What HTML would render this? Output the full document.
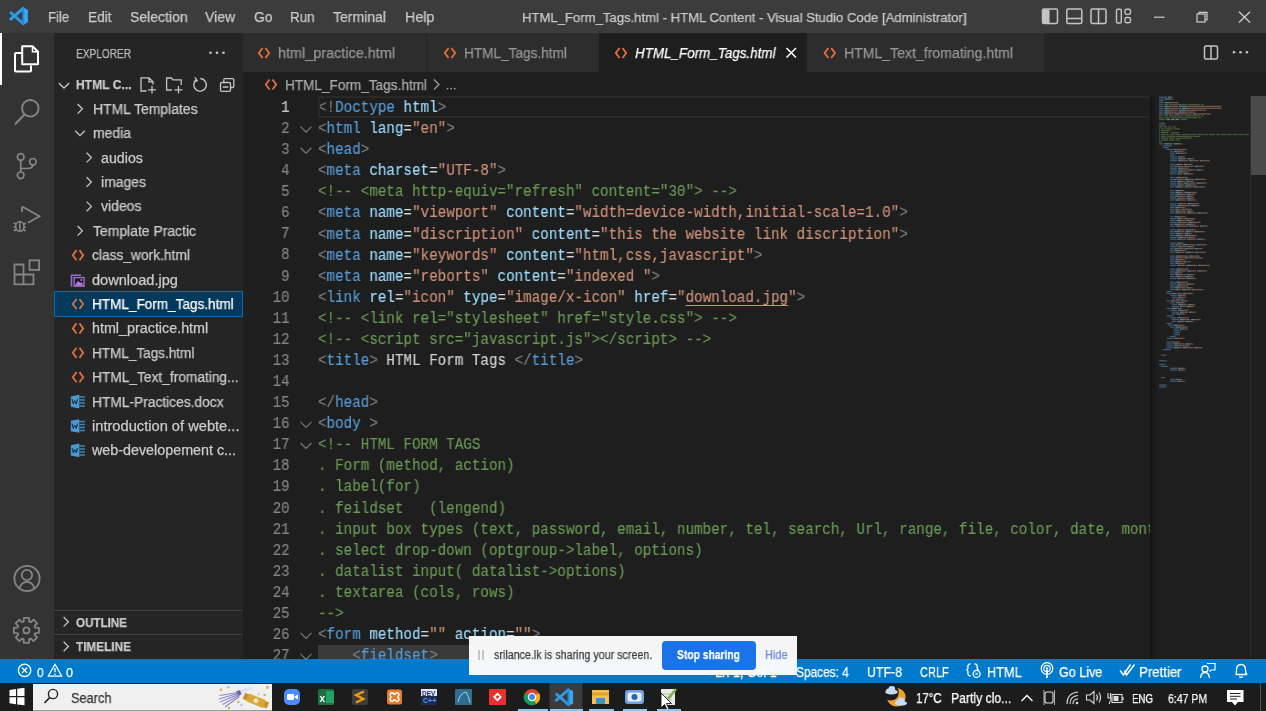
<!DOCTYPE html>
<html><head><meta charset="utf-8"><style>
html,body{margin:0;padding:0;width:1266px;height:711px;overflow:hidden;background:#1e1e1e}
.t{position:absolute;white-space:pre;line-height:1;-webkit-text-stroke:0.25px currentColor;will-change:transform;font-family:"Liberation Sans",sans-serif;transform-origin:0 0}
.code{position:absolute;font-family:"Liberation Mono",monospace;white-space:pre;will-change:transform;-webkit-text-stroke:0.15px currentColor}
</style></head><body>
<div style="position:absolute;left:0;top:0;width:1266px;height:33px;background:#3c3c3c"></div>
<div class="t" style="left:48.30px;top:9.00px;font-size:15.41px;color:#cccccc;font-weight:normal;font-style:normal;transform:scaleX(0.8533);">File</div>
<div class="t" style="left:87.70px;top:9.00px;font-size:15.41px;color:#cccccc;font-weight:normal;font-style:normal;transform:scaleX(0.8855);">Edit</div>
<div class="t" style="left:129.50px;top:9.00px;font-size:15.41px;color:#cccccc;font-weight:normal;font-style:normal;transform:scaleX(0.9117);">Selection</div>
<div class="t" style="left:205.40px;top:9.00px;font-size:15.41px;color:#cccccc;font-weight:normal;font-style:normal;transform:scaleX(0.9106);">View</div>
<div class="t" style="left:253.70px;top:9.00px;font-size:15.41px;color:#cccccc;font-weight:normal;font-style:normal;transform:scaleX(0.8994);">Go</div>
<div class="t" style="left:290.20px;top:9.00px;font-size:15.41px;color:#cccccc;font-weight:normal;font-style:normal;transform:scaleX(0.8666);">Run</div>
<div class="t" style="left:333.20px;top:9.00px;font-size:15.41px;color:#cccccc;font-weight:normal;font-style:normal;transform:scaleX(0.9083);">Terminal</div>
<div class="t" style="left:404.60px;top:9.00px;font-size:15.41px;color:#cccccc;font-weight:normal;font-style:normal;transform:scaleX(0.9274);">Help</div>
<div class="t" style="left:521.50px;top:11.00px;font-size:13.66px;color:#cccccc;font-weight:normal;font-style:normal;transform:scaleX(0.9601);">HTML_Form_Tags.html - HTML Content - Visual Studio Code [Administrator]</div>
<div style="position:absolute;left:0;top:33px;width:54px;height:626px;background:#333333"></div>
<div style="position:absolute;left:0;top:33px;width:2px;height:52px;background:#ffffff"></div>
<div style="position:absolute;left:54px;top:33px;width:189px;height:626px;background:#252526"></div>
<div class="t" style="left:76.20px;top:48.00px;font-size:12.21px;color:#bbbbbb;font-weight:normal;font-style:normal;transform:scaleX(0.8284);">EXPLORER</div>
<div class="t" style="left:76.20px;top:78.00px;font-size:13.66px;color:#cccccc;font-weight:bold;font-style:normal;transform:scaleX(0.8845);">HTML C...</div>
<div class="t" style="left:92.70px;top:102.00px;font-size:14.24px;color:#cccccc;font-weight:normal;font-style:normal;transform:scaleX(0.9788);">HTML Templates</div>
<div class="t" style="left:92.70px;top:126.00px;font-size:14.24px;color:#cccccc;font-weight:normal;font-style:normal;transform:scaleX(0.9816);">media</div>
<div class="t" style="left:100.80px;top:151.00px;font-size:14.24px;color:#cccccc;font-weight:normal;font-style:normal;transform:scaleX(1.0004);">audios</div>
<div class="t" style="left:100.80px;top:175.00px;font-size:14.24px;color:#cccccc;font-weight:normal;font-style:normal;transform:scaleX(0.9804);">images</div>
<div class="t" style="left:100.80px;top:199.00px;font-size:14.24px;color:#cccccc;font-weight:normal;font-style:normal;transform:scaleX(0.9838);">videos</div>
<div class="t" style="left:92.70px;top:224.00px;font-size:14.24px;color:#cccccc;font-weight:normal;font-style:normal;transform:scaleX(0.9791);">Template Practic</div>
<div class="t" style="left:92.30px;top:248.00px;font-size:14.24px;color:#cccccc;font-weight:normal;font-style:normal;transform:scaleX(0.9673);">class_work.html</div>
<div class="t" style="left:92.30px;top:273.00px;font-size:14.24px;color:#cccccc;font-weight:normal;font-style:normal;transform:scaleX(1.0242);">download.jpg</div>
<div style="position:absolute;left:54px;top:291.0px;width:187px;height:24px;background:#04395e;border:1px solid #0a6cb4"></div>
<div class="t" style="left:92.30px;top:297.00px;font-size:14.24px;color:#ffffff;font-weight:normal;font-style:normal;transform:scaleX(0.9529);">HTML_Form_Tags.html</div>
<div class="t" style="left:92.30px;top:321.00px;font-size:14.24px;color:#cccccc;font-weight:normal;font-style:normal;transform:scaleX(1.0061);">html_practice.html</div>
<div class="t" style="left:92.40px;top:346.00px;font-size:14.24px;color:#cccccc;font-weight:normal;font-style:normal;transform:scaleX(0.9512);">HTML_Tags.html</div>
<div class="t" style="left:92.40px;top:370.00px;font-size:14.24px;color:#cccccc;font-weight:normal;font-style:normal;transform:scaleX(0.9646);">HTML_Text_fromating...</div>
<div class="t" style="left:92.40px;top:395.00px;font-size:14.24px;color:#cccccc;font-weight:normal;font-style:normal;transform:scaleX(0.9667);">HTML-Practices.docx</div>
<div class="t" style="left:92.40px;top:419.00px;font-size:14.24px;color:#cccccc;font-weight:normal;font-style:normal;transform:scaleX(1.0298);">introduction of webte...</div>
<div class="t" style="left:92.44px;top:443.00px;font-size:14.24px;color:#cccccc;font-weight:normal;font-style:normal;transform:scaleX(1.0058);">web-developement c...</div>
<div style="position:absolute;left:54px;top:609.5px;width:189px;height:1px;background:#414141"></div>
<div style="position:absolute;left:54px;top:633.5px;width:189px;height:1px;background:#414141"></div>
<div class="t" style="left:76.00px;top:616.00px;font-size:13.37px;color:#cccccc;font-weight:bold;font-style:normal;transform:scaleX(0.8688);">OUTLINE</div>
<div class="t" style="left:76.00px;top:640.00px;font-size:13.37px;color:#cccccc;font-weight:bold;font-style:normal;transform:scaleX(0.8812);">TIMELINE</div>
<div style="position:absolute;left:243px;top:33px;width:1023px;height:39px;background:#252526"></div>
<div style="position:absolute;left:243px;top:33px;width:183px;height:39px;background:#2d2d2d"></div>
<div class="t" style="left:278.00px;top:46.00px;font-size:14.83px;color:#969696;font-weight:normal;font-style:normal;transform:scaleX(0.9725);">html_practice.html</div>
<div style="position:absolute;left:427px;top:33px;width:172px;height:39px;background:#2d2d2d"></div>
<div class="t" style="left:463.50px;top:46.00px;font-size:14.83px;color:#969696;font-weight:normal;font-style:normal;transform:scaleX(0.9184);">HTML_Tags.html</div>
<div style="position:absolute;left:599px;top:33px;width:208px;height:39px;background:#1e1e1e"></div>
<div class="t" style="left:634.50px;top:46.00px;font-size:14.83px;color:#ffffff;font-weight:normal;font-style:italic;transform:scaleX(0.9053);">HTML_Form_Tags.html</div>
<div style="position:absolute;left:807px;top:33px;width:237px;height:39px;background:#2d2d2d"></div>
<div class="t" style="left:843.70px;top:46.00px;font-size:14.83px;color:#969696;font-weight:normal;font-style:normal;transform:scaleX(0.9495);">HTML_Text_fromating.html</div>
<div style="position:absolute;left:243px;top:72px;width:1023px;height:587px;background:#1e1e1e"></div>
<div class="t" style="left:285.00px;top:78.00px;font-size:14.83px;color:#a9a9a9;font-weight:normal;font-style:normal;transform:scaleX(0.9168);">HTML_Form_Tags.html</div>
<div style="position:absolute;left:318px;top:645.3px;width:300px;height:14px;background:#3a3a3a"></div>
<div style="position:absolute;left:318px;top:76.71px;width:832px;height:590.52px;overflow:hidden"><div class="code" style="left:0;top:0;width:911px;font-size:15.6px;line-height:21.09px;transform:scaleX(0.9133);transform-origin:0 0"><div style="height:21.09px"></div><div style="height:21.09px"><span style="color:#808080">&lt;!</span><span style="color:#569cd6">Doctype</span><span style="color:#d4d4d4"> </span><span style="color:#9cdcfe">html</span><span style="color:#808080">&gt;</span></div><div style="height:21.09px"><span style="color:#808080">&lt;</span><span style="color:#569cd6">html</span><span style="color:#d4d4d4"> </span><span style="color:#9cdcfe">lang</span><span style="color:#d4d4d4">=</span><span style="color:#ce9178">&quot;en&quot;</span><span style="color:#808080">&gt;</span></div><div style="height:21.09px"><span style="color:#808080">&lt;</span><span style="color:#569cd6">head</span><span style="color:#808080">&gt;</span></div><div style="height:21.09px"><span style="color:#808080">&lt;</span><span style="color:#569cd6">meta</span><span style="color:#d4d4d4"> </span><span style="color:#9cdcfe">charset</span><span style="color:#d4d4d4">=</span><span style="color:#ce9178">&quot;UTF-8&quot;</span><span style="color:#808080">&gt;</span></div><div style="height:21.09px"><span style="color:#6a9955">&lt;!-- &lt;meta http-equiv=&quot;refresh&quot; content=&quot;30&quot;&gt; --&gt;</span></div><div style="height:21.09px"><span style="color:#808080">&lt;</span><span style="color:#569cd6">meta</span><span style="color:#d4d4d4"> </span><span style="color:#9cdcfe">name</span><span style="color:#d4d4d4">=</span><span style="color:#ce9178">&quot;viewport&quot;</span><span style="color:#d4d4d4"> </span><span style="color:#9cdcfe">content</span><span style="color:#d4d4d4">=</span><span style="color:#ce9178">&quot;width=device-width,initial-scale=1.0&quot;</span><span style="color:#808080">&gt;</span></div><div style="height:21.09px"><span style="color:#808080">&lt;</span><span style="color:#569cd6">meta</span><span style="color:#d4d4d4"> </span><span style="color:#9cdcfe">name</span><span style="color:#d4d4d4">=</span><span style="color:#ce9178">&quot;discription&quot;</span><span style="color:#d4d4d4"> </span><span style="color:#9cdcfe">content</span><span style="color:#d4d4d4">=</span><span style="color:#ce9178">&quot;this the website link discription&quot;</span><span style="color:#808080">&gt;</span></div><div style="height:21.09px"><span style="color:#808080">&lt;</span><span style="color:#569cd6">meta</span><span style="color:#d4d4d4"> </span><span style="color:#9cdcfe">name</span><span style="color:#d4d4d4">=</span><span style="color:#ce9178">&quot;keywords&quot;</span><span style="color:#d4d4d4"> </span><span style="color:#9cdcfe">content</span><span style="color:#d4d4d4">=</span><span style="color:#ce9178">&quot;html,css,javascript&quot;</span><span style="color:#808080">&gt;</span></div><div style="height:21.09px"><span style="color:#808080">&lt;</span><span style="color:#569cd6">meta</span><span style="color:#d4d4d4"> </span><span style="color:#9cdcfe">name</span><span style="color:#d4d4d4">=</span><span style="color:#ce9178">&quot;reborts&quot;</span><span style="color:#d4d4d4"> </span><span style="color:#9cdcfe">content</span><span style="color:#d4d4d4">=</span><span style="color:#ce9178">&quot;indexed &quot;</span><span style="color:#808080">&gt;</span></div><div style="height:21.09px"><span style="color:#808080">&lt;</span><span style="color:#569cd6">link</span><span style="color:#d4d4d4"> </span><span style="color:#9cdcfe">rel</span><span style="color:#d4d4d4">=</span><span style="color:#ce9178">&quot;icon&quot;</span><span style="color:#d4d4d4"> </span><span style="color:#9cdcfe">type</span><span style="color:#d4d4d4">=</span><span style="color:#ce9178">&quot;image/x-icon&quot;</span><span style="color:#d4d4d4"> </span><span style="color:#9cdcfe">href</span><span style="color:#d4d4d4">=</span><span style="color:#ce9178">&quot;</span><span style="color:#ce9178;text-decoration:underline;text-underline-offset:3px">download.jpg</span><span style="color:#ce9178">&quot;</span><span style="color:#808080">&gt;</span></div><div style="height:21.09px"><span style="color:#6a9955">&lt;!-- &lt;link rel=&quot;stylesheet&quot; href=&quot;style.css&quot;&gt; --&gt;</span></div><div style="height:21.09px"><span style="color:#6a9955">&lt;!-- &lt;script src=&quot;javascript.js&quot;&gt;&lt;/script&gt; --&gt;</span></div><div style="height:21.09px"><span style="color:#808080">&lt;</span><span style="color:#569cd6">title</span><span style="color:#808080">&gt;</span><span style="color:#d4d4d4"> HTML Form Tags </span><span style="color:#808080">&lt;/</span><span style="color:#569cd6">title</span><span style="color:#808080">&gt;</span></div><div style="height:21.09px"></div><div style="height:21.09px"><span style="color:#808080">&lt;/</span><span style="color:#569cd6">head</span><span style="color:#808080">&gt;</span></div><div style="height:21.09px"><span style="color:#808080">&lt;</span><span style="color:#569cd6">body</span><span style="color:#808080"> &gt;</span></div><div style="height:21.09px"><span style="color:#6a9955">&lt;!-- HTML FORM TAGS</span></div><div style="height:21.09px"><span style="color:#6a9955">. Form (method, action)</span></div><div style="height:21.09px"><span style="color:#6a9955">. label(for)</span></div><div style="height:21.09px"><span style="color:#6a9955">. feildset   (lengend)</span></div><div style="height:21.09px"><span style="color:#6a9955">. input box types (text, password, email, number, tel, search, Url, range, file, color, date, month, week, time)</span></div><div style="height:21.09px"><span style="color:#6a9955">. select drop-down (optgroup-&gt;label, options)</span></div><div style="height:21.09px"><span style="color:#6a9955">. datalist input( datalist-&gt;options)</span></div><div style="height:21.09px"><span style="color:#6a9955">. textarea (cols, rows)</span></div><div style="height:21.09px"><span style="color:#6a9955">--&gt;</span></div><div style="height:21.09px"><span style="color:#808080">&lt;</span><span style="color:#569cd6">form</span><span style="color:#d4d4d4"> </span><span style="color:#9cdcfe">method</span><span style="color:#d4d4d4">=</span><span style="color:#ce9178">&quot;&quot;</span><span style="color:#d4d4d4"> </span><span style="color:#9cdcfe">action</span><span style="color:#d4d4d4">=</span><span style="color:#ce9178">&quot;&quot;</span><span style="color:#808080">&gt;</span></div><div style="height:21.09px"><span style="color:#d4d4d4">    </span><span style="color:#808080">&lt;</span><span style="color:#569cd6">fieldset</span><span style="color:#808080">&gt;</span></div></div></div>
<div class="code" style="left:230px;top:97.80px;width:65.70px;text-align:right;font-size:15.6px;line-height:21.09px;color:#c6c6c6;transform:scaleX(0.9133);transform-origin:100% 0;left:224.30px">1</div>
<div class="code" style="left:230px;top:118.89px;width:65.70px;text-align:right;font-size:15.6px;line-height:21.09px;color:#858585;transform:scaleX(0.9133);transform-origin:100% 0;left:224.30px">2</div>
<div class="code" style="left:230px;top:139.98px;width:65.70px;text-align:right;font-size:15.6px;line-height:21.09px;color:#858585;transform:scaleX(0.9133);transform-origin:100% 0;left:224.30px">3</div>
<div class="code" style="left:230px;top:161.07px;width:65.70px;text-align:right;font-size:15.6px;line-height:21.09px;color:#858585;transform:scaleX(0.9133);transform-origin:100% 0;left:224.30px">4</div>
<div class="code" style="left:230px;top:182.16px;width:65.70px;text-align:right;font-size:15.6px;line-height:21.09px;color:#858585;transform:scaleX(0.9133);transform-origin:100% 0;left:224.30px">5</div>
<div class="code" style="left:230px;top:203.25px;width:65.70px;text-align:right;font-size:15.6px;line-height:21.09px;color:#858585;transform:scaleX(0.9133);transform-origin:100% 0;left:224.30px">6</div>
<div class="code" style="left:230px;top:224.34px;width:65.70px;text-align:right;font-size:15.6px;line-height:21.09px;color:#858585;transform:scaleX(0.9133);transform-origin:100% 0;left:224.30px">7</div>
<div class="code" style="left:230px;top:245.43px;width:65.70px;text-align:right;font-size:15.6px;line-height:21.09px;color:#858585;transform:scaleX(0.9133);transform-origin:100% 0;left:224.30px">8</div>
<div class="code" style="left:230px;top:266.52px;width:65.70px;text-align:right;font-size:15.6px;line-height:21.09px;color:#858585;transform:scaleX(0.9133);transform-origin:100% 0;left:224.30px">9</div>
<div class="code" style="left:230px;top:287.61px;width:65.70px;text-align:right;font-size:15.6px;line-height:21.09px;color:#858585;transform:scaleX(0.9133);transform-origin:100% 0;left:224.30px">10</div>
<div class="code" style="left:230px;top:308.70px;width:65.70px;text-align:right;font-size:15.6px;line-height:21.09px;color:#858585;transform:scaleX(0.9133);transform-origin:100% 0;left:224.30px">11</div>
<div class="code" style="left:230px;top:329.79px;width:65.70px;text-align:right;font-size:15.6px;line-height:21.09px;color:#858585;transform:scaleX(0.9133);transform-origin:100% 0;left:224.30px">12</div>
<div class="code" style="left:230px;top:350.88px;width:65.70px;text-align:right;font-size:15.6px;line-height:21.09px;color:#858585;transform:scaleX(0.9133);transform-origin:100% 0;left:224.30px">13</div>
<div class="code" style="left:230px;top:371.97px;width:65.70px;text-align:right;font-size:15.6px;line-height:21.09px;color:#858585;transform:scaleX(0.9133);transform-origin:100% 0;left:224.30px">14</div>
<div class="code" style="left:230px;top:393.06px;width:65.70px;text-align:right;font-size:15.6px;line-height:21.09px;color:#858585;transform:scaleX(0.9133);transform-origin:100% 0;left:224.30px">15</div>
<div class="code" style="left:230px;top:414.15px;width:65.70px;text-align:right;font-size:15.6px;line-height:21.09px;color:#858585;transform:scaleX(0.9133);transform-origin:100% 0;left:224.30px">16</div>
<div class="code" style="left:230px;top:435.24px;width:65.70px;text-align:right;font-size:15.6px;line-height:21.09px;color:#858585;transform:scaleX(0.9133);transform-origin:100% 0;left:224.30px">17</div>
<div class="code" style="left:230px;top:456.33px;width:65.70px;text-align:right;font-size:15.6px;line-height:21.09px;color:#858585;transform:scaleX(0.9133);transform-origin:100% 0;left:224.30px">18</div>
<div class="code" style="left:230px;top:477.42px;width:65.70px;text-align:right;font-size:15.6px;line-height:21.09px;color:#858585;transform:scaleX(0.9133);transform-origin:100% 0;left:224.30px">19</div>
<div class="code" style="left:230px;top:498.51px;width:65.70px;text-align:right;font-size:15.6px;line-height:21.09px;color:#858585;transform:scaleX(0.9133);transform-origin:100% 0;left:224.30px">20</div>
<div class="code" style="left:230px;top:519.60px;width:65.70px;text-align:right;font-size:15.6px;line-height:21.09px;color:#858585;transform:scaleX(0.9133);transform-origin:100% 0;left:224.30px">21</div>
<div class="code" style="left:230px;top:540.69px;width:65.70px;text-align:right;font-size:15.6px;line-height:21.09px;color:#858585;transform:scaleX(0.9133);transform-origin:100% 0;left:224.30px">22</div>
<div class="code" style="left:230px;top:561.78px;width:65.70px;text-align:right;font-size:15.6px;line-height:21.09px;color:#858585;transform:scaleX(0.9133);transform-origin:100% 0;left:224.30px">23</div>
<div class="code" style="left:230px;top:582.87px;width:65.70px;text-align:right;font-size:15.6px;line-height:21.09px;color:#858585;transform:scaleX(0.9133);transform-origin:100% 0;left:224.30px">24</div>
<div class="code" style="left:230px;top:603.96px;width:65.70px;text-align:right;font-size:15.6px;line-height:21.09px;color:#858585;transform:scaleX(0.9133);transform-origin:100% 0;left:224.30px">25</div>
<div class="code" style="left:230px;top:625.05px;width:65.70px;text-align:right;font-size:15.6px;line-height:21.09px;color:#858585;transform:scaleX(0.9133);transform-origin:100% 0;left:224.30px">26</div>
<div class="code" style="left:230px;top:646.14px;width:65.70px;text-align:right;font-size:15.6px;line-height:21.09px;color:#858585;transform:scaleX(0.9133);transform-origin:100% 0;left:224.30px">27</div>
<div style="position:absolute;left:0;top:659px;width:1266px;height:24px;background:#007acc"></div>
<div style="position:absolute;left:0;top:683px;width:1266px;height:28px;background:#1c1c1c"></div>
<div style="position:absolute;left:33px;top:684px;width:239px;height:25.7px;background:#f0f0f0"></div><div style="position:absolute;left:33px;top:709.7px;width:239px;height:1.3px;background:#9a9a9a"></div>
<div style="position:absolute;left:318px;top:96.3px;width:832px;height:17.6px;border:2px solid #282828;border-right:none"></div>
<div style="position:absolute;left:1150px;top:96px;width:100px;height:563px;background:#1e1e1e"></div>
<div style="position:absolute;left:1150px;top:96px;width:7px;height:563px;background:linear-gradient(to right,#141414,#1e1e1e)"></div>
<div style="position:absolute;left:1250px;top:96px;width:1px;height:563px;background:#2b2b2b"></div>
<svg style="position:absolute;left:0;top:0" width="1266" height="711"><g opacity="0.5"><rect x="1159.00" y="96.5" width="1.82" height="1.2" fill="#808080"/><rect x="1160.82" y="96.5" width="6.37" height="1.2" fill="#569cd6"/><rect x="1168.10" y="96.5" width="3.64" height="1.2" fill="#9cdcfe"/><rect x="1171.74" y="96.5" width="0.91" height="1.2" fill="#808080"/><rect x="1159.00" y="98.4" width="0.91" height="1.2" fill="#808080"/><rect x="1159.91" y="98.4" width="3.64" height="1.2" fill="#569cd6"/><rect x="1164.46" y="98.4" width="3.64" height="1.2" fill="#9cdcfe"/><rect x="1168.10" y="98.4" width="0.91" height="1.2" fill="#d4d4d4"/><rect x="1169.01" y="98.4" width="3.64" height="1.2" fill="#ce9178"/><rect x="1172.65" y="98.4" width="0.91" height="1.2" fill="#808080"/><rect x="1159.00" y="100.2" width="0.91" height="1.2" fill="#808080"/><rect x="1159.91" y="100.2" width="3.64" height="1.2" fill="#569cd6"/><rect x="1163.55" y="100.2" width="0.91" height="1.2" fill="#808080"/><rect x="1159.00" y="102.1" width="0.91" height="1.2" fill="#808080"/><rect x="1159.91" y="102.1" width="3.64" height="1.2" fill="#569cd6"/><rect x="1164.46" y="102.1" width="6.37" height="1.2" fill="#9cdcfe"/><rect x="1170.83" y="102.1" width="0.91" height="1.2" fill="#d4d4d4"/><rect x="1171.74" y="102.1" width="6.37" height="1.2" fill="#ce9178"/><rect x="1178.11" y="102.1" width="0.91" height="1.2" fill="#808080"/><rect x="1159.00" y="104.0" width="3.64" height="1.2" fill="#6a9955"/><rect x="1163.55" y="104.0" width="4.55" height="1.2" fill="#6a9955"/><rect x="1169.01" y="104.0" width="18.20" height="1.2" fill="#6a9955"/><rect x="1188.12" y="104.0" width="11.83" height="1.2" fill="#6a9955"/><rect x="1200.86" y="104.0" width="2.73" height="1.2" fill="#6a9955"/><rect x="1159.00" y="105.8" width="0.91" height="1.2" fill="#808080"/><rect x="1159.91" y="105.8" width="3.64" height="1.2" fill="#569cd6"/><rect x="1164.46" y="105.8" width="3.64" height="1.2" fill="#9cdcfe"/><rect x="1168.10" y="105.8" width="0.91" height="1.2" fill="#d4d4d4"/><rect x="1169.01" y="105.8" width="9.10" height="1.2" fill="#ce9178"/><rect x="1179.02" y="105.8" width="6.37" height="1.2" fill="#9cdcfe"/><rect x="1185.39" y="105.8" width="0.91" height="1.2" fill="#d4d4d4"/><rect x="1186.30" y="105.8" width="34.58" height="1.2" fill="#ce9178"/><rect x="1220.88" y="105.8" width="0.91" height="1.2" fill="#808080"/><rect x="1159.00" y="107.7" width="0.91" height="1.2" fill="#808080"/><rect x="1159.91" y="107.7" width="3.64" height="1.2" fill="#569cd6"/><rect x="1164.46" y="107.7" width="3.64" height="1.2" fill="#9cdcfe"/><rect x="1168.10" y="107.7" width="0.91" height="1.2" fill="#d4d4d4"/><rect x="1169.01" y="107.7" width="11.83" height="1.2" fill="#ce9178"/><rect x="1181.75" y="107.7" width="6.37" height="1.2" fill="#9cdcfe"/><rect x="1188.12" y="107.7" width="0.91" height="1.2" fill="#d4d4d4"/><rect x="1189.03" y="107.7" width="31.85" height="1.2" fill="#ce9178"/><rect x="1220.88" y="107.7" width="0.91" height="1.2" fill="#808080"/><rect x="1159.00" y="109.6" width="0.91" height="1.2" fill="#808080"/><rect x="1159.91" y="109.6" width="3.64" height="1.2" fill="#569cd6"/><rect x="1164.46" y="109.6" width="3.64" height="1.2" fill="#9cdcfe"/><rect x="1168.10" y="109.6" width="0.91" height="1.2" fill="#d4d4d4"/><rect x="1169.01" y="109.6" width="9.10" height="1.2" fill="#ce9178"/><rect x="1179.02" y="109.6" width="6.37" height="1.2" fill="#9cdcfe"/><rect x="1185.39" y="109.6" width="0.91" height="1.2" fill="#d4d4d4"/><rect x="1186.30" y="109.6" width="19.11" height="1.2" fill="#ce9178"/><rect x="1205.41" y="109.6" width="0.91" height="1.2" fill="#808080"/><rect x="1159.00" y="111.5" width="0.91" height="1.2" fill="#808080"/><rect x="1159.91" y="111.5" width="3.64" height="1.2" fill="#569cd6"/><rect x="1164.46" y="111.5" width="3.64" height="1.2" fill="#9cdcfe"/><rect x="1168.10" y="111.5" width="0.91" height="1.2" fill="#d4d4d4"/><rect x="1169.01" y="111.5" width="8.19" height="1.2" fill="#ce9178"/><rect x="1178.11" y="111.5" width="6.37" height="1.2" fill="#9cdcfe"/><rect x="1184.48" y="111.5" width="0.91" height="1.2" fill="#d4d4d4"/><rect x="1185.39" y="111.5" width="9.10" height="1.2" fill="#ce9178"/><rect x="1194.49" y="111.5" width="0.91" height="1.2" fill="#808080"/><rect x="1159.00" y="113.3" width="0.91" height="1.2" fill="#808080"/><rect x="1159.91" y="113.3" width="3.64" height="1.2" fill="#569cd6"/><rect x="1164.46" y="113.3" width="2.73" height="1.2" fill="#9cdcfe"/><rect x="1167.19" y="113.3" width="0.91" height="1.2" fill="#d4d4d4"/><rect x="1168.10" y="113.3" width="5.46" height="1.2" fill="#ce9178"/><rect x="1174.47" y="113.3" width="3.64" height="1.2" fill="#9cdcfe"/><rect x="1178.11" y="113.3" width="0.91" height="1.2" fill="#d4d4d4"/><rect x="1179.02" y="113.3" width="12.74" height="1.2" fill="#ce9178"/><rect x="1192.67" y="113.3" width="3.64" height="1.2" fill="#9cdcfe"/><rect x="1196.31" y="113.3" width="0.91" height="1.2" fill="#d4d4d4"/><rect x="1197.22" y="113.3" width="0.91" height="1.2" fill="#ce9178"/><rect x="1198.13" y="113.3" width="10.92" height="1.2" fill="#ce9178"/><rect x="1209.05" y="113.3" width="0.91" height="1.2" fill="#ce9178"/><rect x="1209.96" y="113.3" width="0.91" height="1.2" fill="#808080"/><rect x="1159.00" y="115.2" width="3.64" height="1.2" fill="#6a9955"/><rect x="1163.55" y="115.2" width="4.55" height="1.2" fill="#6a9955"/><rect x="1169.01" y="115.2" width="14.56" height="1.2" fill="#6a9955"/><rect x="1184.48" y="115.2" width="15.47" height="1.2" fill="#6a9955"/><rect x="1200.86" y="115.2" width="2.73" height="1.2" fill="#6a9955"/><rect x="1159.00" y="117.1" width="3.64" height="1.2" fill="#6a9955"/><rect x="1163.55" y="117.1" width="6.37" height="1.2" fill="#6a9955"/><rect x="1170.83" y="117.1" width="26.39" height="1.2" fill="#6a9955"/><rect x="1198.13" y="117.1" width="2.73" height="1.2" fill="#6a9955"/><rect x="1159.00" y="118.9" width="0.91" height="1.2" fill="#808080"/><rect x="1159.91" y="118.9" width="4.55" height="1.2" fill="#569cd6"/><rect x="1164.46" y="118.9" width="0.91" height="1.2" fill="#808080"/><rect x="1166.28" y="118.9" width="3.64" height="1.2" fill="#d4d4d4"/><rect x="1170.83" y="118.9" width="3.64" height="1.2" fill="#d4d4d4"/><rect x="1175.38" y="118.9" width="3.64" height="1.2" fill="#d4d4d4"/><rect x="1179.93" y="118.9" width="1.82" height="1.2" fill="#808080"/><rect x="1181.75" y="118.9" width="4.55" height="1.2" fill="#569cd6"/><rect x="1186.30" y="118.9" width="0.91" height="1.2" fill="#808080"/><rect x="1159.00" y="122.7" width="1.82" height="1.2" fill="#808080"/><rect x="1160.82" y="122.7" width="3.64" height="1.2" fill="#569cd6"/><rect x="1164.46" y="122.7" width="0.91" height="1.2" fill="#808080"/><rect x="1159.00" y="124.5" width="0.91" height="1.2" fill="#808080"/><rect x="1159.91" y="124.5" width="3.64" height="1.2" fill="#569cd6"/><rect x="1163.55" y="124.5" width="1.82" height="1.2" fill="#808080"/><rect x="1159.00" y="126.4" width="3.64" height="1.2" fill="#6a9955"/><rect x="1163.55" y="126.4" width="3.64" height="1.2" fill="#6a9955"/><rect x="1168.10" y="126.4" width="3.64" height="1.2" fill="#6a9955"/><rect x="1172.65" y="126.4" width="3.64" height="1.2" fill="#6a9955"/><rect x="1159.00" y="128.3" width="0.91" height="1.2" fill="#6a9955"/><rect x="1160.82" y="128.3" width="3.64" height="1.2" fill="#6a9955"/><rect x="1165.37" y="128.3" width="7.28" height="1.2" fill="#6a9955"/><rect x="1173.56" y="128.3" width="6.37" height="1.2" fill="#6a9955"/><rect x="1159.00" y="130.2" width="0.91" height="1.2" fill="#6a9955"/><rect x="1160.82" y="130.2" width="9.10" height="1.2" fill="#6a9955"/><rect x="1159.00" y="132.0" width="0.91" height="1.2" fill="#6a9955"/><rect x="1160.82" y="132.0" width="7.28" height="1.2" fill="#6a9955"/><rect x="1170.83" y="132.0" width="8.19" height="1.2" fill="#6a9955"/><rect x="1159.00" y="133.9" width="0.91" height="1.2" fill="#6a9955"/><rect x="1160.82" y="133.9" width="4.55" height="1.2" fill="#6a9955"/><rect x="1166.28" y="133.9" width="2.73" height="1.2" fill="#6a9955"/><rect x="1169.92" y="133.9" width="4.55" height="1.2" fill="#6a9955"/><rect x="1175.38" y="133.9" width="5.46" height="1.2" fill="#6a9955"/><rect x="1181.75" y="133.9" width="8.19" height="1.2" fill="#6a9955"/><rect x="1190.85" y="133.9" width="5.46" height="1.2" fill="#6a9955"/><rect x="1197.22" y="133.9" width="6.37" height="1.2" fill="#6a9955"/><rect x="1204.50" y="133.9" width="3.64" height="1.2" fill="#6a9955"/><rect x="1209.05" y="133.9" width="6.37" height="1.2" fill="#6a9955"/><rect x="1216.33" y="133.9" width="3.64" height="1.2" fill="#6a9955"/><rect x="1220.88" y="133.9" width="5.46" height="1.2" fill="#6a9955"/><rect x="1227.25" y="133.9" width="4.55" height="1.2" fill="#6a9955"/><rect x="1232.71" y="133.9" width="5.46" height="1.2" fill="#6a9955"/><rect x="1239.08" y="133.9" width="4.55" height="1.2" fill="#6a9955"/><rect x="1244.54" y="133.9" width="4.46" height="1.2" fill="#6a9955"/><rect x="1159.00" y="135.8" width="0.91" height="1.2" fill="#6a9955"/><rect x="1160.82" y="135.8" width="5.46" height="1.2" fill="#6a9955"/><rect x="1167.19" y="135.8" width="8.19" height="1.2" fill="#6a9955"/><rect x="1176.29" y="135.8" width="15.47" height="1.2" fill="#6a9955"/><rect x="1192.67" y="135.8" width="7.28" height="1.2" fill="#6a9955"/><rect x="1159.00" y="137.6" width="0.91" height="1.2" fill="#6a9955"/><rect x="1160.82" y="137.6" width="7.28" height="1.2" fill="#6a9955"/><rect x="1169.01" y="137.6" width="5.46" height="1.2" fill="#6a9955"/><rect x="1175.38" y="137.6" width="16.38" height="1.2" fill="#6a9955"/><rect x="1159.00" y="139.5" width="0.91" height="1.2" fill="#6a9955"/><rect x="1160.82" y="139.5" width="7.28" height="1.2" fill="#6a9955"/><rect x="1169.01" y="139.5" width="5.46" height="1.2" fill="#6a9955"/><rect x="1175.38" y="139.5" width="4.55" height="1.2" fill="#6a9955"/><rect x="1159.00" y="141.4" width="2.73" height="1.2" fill="#6a9955"/><rect x="1159.00" y="143.2" width="0.91" height="1.2" fill="#808080"/><rect x="1159.91" y="143.2" width="3.64" height="1.2" fill="#569cd6"/><rect x="1164.46" y="143.2" width="5.46" height="1.2" fill="#9cdcfe"/><rect x="1169.92" y="143.2" width="0.91" height="1.2" fill="#d4d4d4"/><rect x="1170.83" y="143.2" width="1.82" height="1.2" fill="#ce9178"/><rect x="1173.56" y="143.2" width="5.46" height="1.2" fill="#9cdcfe"/><rect x="1179.02" y="143.2" width="0.91" height="1.2" fill="#d4d4d4"/><rect x="1179.93" y="143.2" width="1.82" height="1.2" fill="#ce9178"/><rect x="1181.75" y="143.2" width="0.91" height="1.2" fill="#808080"/><rect x="1162.64" y="145.1" width="0.91" height="1.2" fill="#808080"/><rect x="1163.55" y="145.1" width="7.28" height="1.2" fill="#569cd6"/><rect x="1170.83" y="145.1" width="0.91" height="1.2" fill="#808080"/><rect x="1162.64" y="147.0" width="0.91" height="1.2" fill="#808080"/><rect x="1163.55" y="147.0" width="4.55" height="1.2" fill="#569cd6"/><rect x="1168.10" y="147.0" width="0.91" height="1.2" fill="#808080"/><rect x="1166.28" y="148.9" width="0.91" height="1.2" fill="#808080"/><rect x="1167.19" y="148.9" width="5.46" height="1.2" fill="#569cd6"/><rect x="1173.56" y="148.9" width="1.82" height="1.2" fill="#9cdcfe"/><rect x="1175.38" y="148.9" width="0.91" height="1.2" fill="#d4d4d4"/><rect x="1176.29" y="148.9" width="10.01" height="1.2" fill="#ce9178"/><rect x="1186.30" y="148.9" width="0.91" height="1.2" fill="#808080"/><rect x="1169.92" y="150.7" width="0.91" height="1.2" fill="#808080"/><rect x="1170.83" y="150.7" width="2.73" height="1.2" fill="#569cd6"/><rect x="1174.47" y="150.7" width="1.82" height="1.2" fill="#9cdcfe"/><rect x="1176.29" y="150.7" width="0.91" height="1.2" fill="#d4d4d4"/><rect x="1177.20" y="150.7" width="6.37" height="1.2" fill="#ce9178"/><rect x="1183.57" y="150.7" width="0.91" height="1.2" fill="#808080"/><rect x="1169.92" y="152.6" width="0.91" height="1.2" fill="#808080"/><rect x="1170.83" y="152.6" width="3.64" height="1.2" fill="#569cd6"/><rect x="1175.38" y="152.6" width="4.55" height="1.2" fill="#9cdcfe"/><rect x="1179.93" y="152.6" width="0.91" height="1.2" fill="#d4d4d4"/><rect x="1180.84" y="152.6" width="5.46" height="1.2" fill="#ce9178"/><rect x="1186.30" y="152.6" width="0.91" height="1.2" fill="#808080"/><rect x="1169.92" y="154.5" width="0.91" height="1.2" fill="#808080"/><rect x="1170.83" y="154.5" width="2.73" height="1.2" fill="#569cd6"/><rect x="1173.56" y="154.5" width="0.91" height="1.2" fill="#808080"/><rect x="1169.92" y="156.3" width="0.91" height="1.2" fill="#808080"/><rect x="1170.83" y="156.3" width="6.37" height="1.2" fill="#569cd6"/><rect x="1178.11" y="156.3" width="1.82" height="1.2" fill="#9cdcfe"/><rect x="1179.93" y="156.3" width="0.91" height="1.2" fill="#d4d4d4"/><rect x="1180.84" y="156.3" width="3.64" height="1.2" fill="#ce9178"/><rect x="1184.48" y="156.3" width="0.91" height="1.2" fill="#808080"/><rect x="1169.92" y="158.2" width="0.91" height="1.2" fill="#808080"/><rect x="1170.83" y="158.2" width="6.37" height="1.2" fill="#569cd6"/><rect x="1178.11" y="158.2" width="4.55" height="1.2" fill="#9cdcfe"/><rect x="1182.66" y="158.2" width="0.91" height="1.2" fill="#d4d4d4"/><rect x="1183.57" y="158.2" width="2.73" height="1.2" fill="#ce9178"/><rect x="1187.21" y="158.2" width="2.73" height="1.2" fill="#9cdcfe"/><rect x="1189.94" y="158.2" width="0.91" height="1.2" fill="#d4d4d4"/><rect x="1190.85" y="158.2" width="2.73" height="1.2" fill="#ce9178"/><rect x="1193.58" y="158.2" width="0.91" height="1.2" fill="#808080"/><rect x="1169.92" y="160.1" width="0.91" height="1.2" fill="#808080"/><rect x="1170.83" y="160.1" width="6.37" height="1.2" fill="#569cd6"/><rect x="1178.11" y="160.1" width="3.64" height="1.2" fill="#9cdcfe"/><rect x="1181.75" y="160.1" width="0.91" height="1.2" fill="#d4d4d4"/><rect x="1182.66" y="160.1" width="5.46" height="1.2" fill="#ce9178"/><rect x="1189.03" y="160.1" width="2.73" height="1.2" fill="#9cdcfe"/><rect x="1191.76" y="160.1" width="0.91" height="1.2" fill="#d4d4d4"/><rect x="1192.67" y="160.1" width="6.37" height="1.2" fill="#ce9178"/><rect x="1199.95" y="160.1" width="1.82" height="1.2" fill="#9cdcfe"/><rect x="1201.77" y="160.1" width="0.91" height="1.2" fill="#d4d4d4"/><rect x="1202.68" y="160.1" width="6.37" height="1.2" fill="#ce9178"/><rect x="1209.05" y="160.1" width="0.91" height="1.2" fill="#808080"/><rect x="1169.92" y="163.8" width="0.91" height="1.2" fill="#808080"/><rect x="1170.83" y="163.8" width="4.55" height="1.2" fill="#569cd6"/><rect x="1176.29" y="163.8" width="2.73" height="1.2" fill="#9cdcfe"/><rect x="1179.02" y="163.8" width="0.91" height="1.2" fill="#d4d4d4"/><rect x="1179.93" y="163.8" width="2.73" height="1.2" fill="#ce9178"/><rect x="1183.57" y="163.8" width="2.73" height="1.2" fill="#9cdcfe"/><rect x="1186.30" y="163.8" width="0.91" height="1.2" fill="#d4d4d4"/><rect x="1187.21" y="163.8" width="4.55" height="1.2" fill="#ce9178"/><rect x="1191.76" y="163.8" width="0.91" height="1.2" fill="#808080"/><rect x="1169.92" y="165.7" width="0.91" height="1.2" fill="#808080"/><rect x="1170.83" y="165.7" width="2.73" height="1.2" fill="#569cd6"/><rect x="1174.47" y="165.7" width="1.82" height="1.2" fill="#9cdcfe"/><rect x="1176.29" y="165.7" width="0.91" height="1.2" fill="#d4d4d4"/><rect x="1177.20" y="165.7" width="6.37" height="1.2" fill="#ce9178"/><rect x="1184.48" y="165.7" width="1.82" height="1.2" fill="#9cdcfe"/><rect x="1186.30" y="165.7" width="0.91" height="1.2" fill="#d4d4d4"/><rect x="1187.21" y="165.7" width="6.37" height="1.2" fill="#ce9178"/><rect x="1194.49" y="165.7" width="2.73" height="1.2" fill="#9cdcfe"/><rect x="1197.22" y="165.7" width="0.91" height="1.2" fill="#d4d4d4"/><rect x="1198.13" y="165.7" width="5.46" height="1.2" fill="#ce9178"/><rect x="1203.59" y="165.7" width="0.91" height="1.2" fill="#808080"/><rect x="1169.92" y="167.6" width="0.91" height="1.2" fill="#808080"/><rect x="1170.83" y="167.6" width="6.37" height="1.2" fill="#569cd6"/><rect x="1178.11" y="167.6" width="3.64" height="1.2" fill="#9cdcfe"/><rect x="1181.75" y="167.6" width="0.91" height="1.2" fill="#d4d4d4"/><rect x="1182.66" y="167.6" width="5.46" height="1.2" fill="#ce9178"/><rect x="1188.12" y="167.6" width="0.91" height="1.2" fill="#808080"/><rect x="1169.92" y="169.4" width="0.91" height="1.2" fill="#808080"/><rect x="1170.83" y="169.4" width="6.37" height="1.2" fill="#569cd6"/><rect x="1178.11" y="169.4" width="3.64" height="1.2" fill="#9cdcfe"/><rect x="1181.75" y="169.4" width="0.91" height="1.2" fill="#d4d4d4"/><rect x="1182.66" y="169.4" width="4.55" height="1.2" fill="#ce9178"/><rect x="1188.12" y="169.4" width="2.73" height="1.2" fill="#9cdcfe"/><rect x="1190.85" y="169.4" width="0.91" height="1.2" fill="#d4d4d4"/><rect x="1191.76" y="169.4" width="3.64" height="1.2" fill="#ce9178"/><rect x="1196.31" y="169.4" width="2.73" height="1.2" fill="#9cdcfe"/><rect x="1199.04" y="169.4" width="0.91" height="1.2" fill="#d4d4d4"/><rect x="1199.95" y="169.4" width="2.73" height="1.2" fill="#ce9178"/><rect x="1202.68" y="169.4" width="0.91" height="1.2" fill="#808080"/><rect x="1169.92" y="171.3" width="0.91" height="1.2" fill="#808080"/><rect x="1170.83" y="171.3" width="6.37" height="1.2" fill="#569cd6"/><rect x="1178.11" y="171.3" width="4.55" height="1.2" fill="#9cdcfe"/><rect x="1182.66" y="171.3" width="0.91" height="1.2" fill="#d4d4d4"/><rect x="1183.57" y="171.3" width="4.55" height="1.2" fill="#ce9178"/><rect x="1188.12" y="171.3" width="0.91" height="1.2" fill="#808080"/><rect x="1169.92" y="173.2" width="0.91" height="1.2" fill="#808080"/><rect x="1170.83" y="173.2" width="5.46" height="1.2" fill="#569cd6"/><rect x="1177.20" y="173.2" width="1.82" height="1.2" fill="#9cdcfe"/><rect x="1179.02" y="173.2" width="0.91" height="1.2" fill="#d4d4d4"/><rect x="1179.93" y="173.2" width="2.73" height="1.2" fill="#ce9178"/><rect x="1183.57" y="173.2" width="4.55" height="1.2" fill="#9cdcfe"/><rect x="1188.12" y="173.2" width="0.91" height="1.2" fill="#d4d4d4"/><rect x="1189.03" y="173.2" width="3.64" height="1.2" fill="#ce9178"/><rect x="1192.67" y="173.2" width="0.91" height="1.2" fill="#808080"/><rect x="1169.92" y="176.9" width="0.91" height="1.2" fill="#808080"/><rect x="1170.83" y="176.9" width="4.55" height="1.2" fill="#569cd6"/><rect x="1176.29" y="176.9" width="4.55" height="1.2" fill="#9cdcfe"/><rect x="1180.84" y="176.9" width="0.91" height="1.2" fill="#d4d4d4"/><rect x="1181.75" y="176.9" width="5.46" height="1.2" fill="#ce9178"/><rect x="1187.21" y="176.9" width="0.91" height="1.2" fill="#808080"/><rect x="1169.92" y="178.8" width="0.91" height="1.2" fill="#808080"/><rect x="1170.83" y="178.8" width="2.73" height="1.2" fill="#569cd6"/><rect x="1174.47" y="178.8" width="1.82" height="1.2" fill="#9cdcfe"/><rect x="1176.29" y="178.8" width="0.91" height="1.2" fill="#d4d4d4"/><rect x="1177.20" y="178.8" width="6.37" height="1.2" fill="#ce9178"/><rect x="1184.48" y="178.8" width="3.64" height="1.2" fill="#9cdcfe"/><rect x="1188.12" y="178.8" width="0.91" height="1.2" fill="#d4d4d4"/><rect x="1189.03" y="178.8" width="4.55" height="1.2" fill="#ce9178"/><rect x="1194.49" y="178.8" width="3.64" height="1.2" fill="#9cdcfe"/><rect x="1198.13" y="178.8" width="0.91" height="1.2" fill="#d4d4d4"/><rect x="1199.04" y="178.8" width="6.37" height="1.2" fill="#ce9178"/><rect x="1205.41" y="178.8" width="0.91" height="1.2" fill="#808080"/><rect x="1169.92" y="180.7" width="0.91" height="1.2" fill="#808080"/><rect x="1170.83" y="180.7" width="5.46" height="1.2" fill="#569cd6"/><rect x="1177.20" y="180.7" width="4.55" height="1.2" fill="#9cdcfe"/><rect x="1181.75" y="180.7" width="0.91" height="1.2" fill="#d4d4d4"/><rect x="1182.66" y="180.7" width="2.73" height="1.2" fill="#ce9178"/><rect x="1186.30" y="180.7" width="1.82" height="1.2" fill="#9cdcfe"/><rect x="1188.12" y="180.7" width="0.91" height="1.2" fill="#d4d4d4"/><rect x="1189.03" y="180.7" width="4.55" height="1.2" fill="#ce9178"/><rect x="1193.58" y="180.7" width="0.91" height="1.2" fill="#808080"/><rect x="1169.92" y="182.5" width="0.91" height="1.2" fill="#808080"/><rect x="1170.83" y="182.5" width="5.46" height="1.2" fill="#569cd6"/><rect x="1177.20" y="182.5" width="1.82" height="1.2" fill="#9cdcfe"/><rect x="1179.02" y="182.5" width="0.91" height="1.2" fill="#d4d4d4"/><rect x="1179.93" y="182.5" width="2.73" height="1.2" fill="#ce9178"/><rect x="1183.57" y="182.5" width="3.64" height="1.2" fill="#9cdcfe"/><rect x="1187.21" y="182.5" width="0.91" height="1.2" fill="#d4d4d4"/><rect x="1188.12" y="182.5" width="7.28" height="1.2" fill="#ce9178"/><rect x="1196.31" y="182.5" width="4.55" height="1.2" fill="#9cdcfe"/><rect x="1200.86" y="182.5" width="0.91" height="1.2" fill="#d4d4d4"/><rect x="1201.77" y="182.5" width="4.55" height="1.2" fill="#ce9178"/><rect x="1206.32" y="182.5" width="0.91" height="1.2" fill="#808080"/><rect x="1169.92" y="184.4" width="0.91" height="1.2" fill="#808080"/><rect x="1170.83" y="184.4" width="5.46" height="1.2" fill="#569cd6"/><rect x="1177.20" y="184.4" width="3.64" height="1.2" fill="#9cdcfe"/><rect x="1180.84" y="184.4" width="0.91" height="1.2" fill="#d4d4d4"/><rect x="1181.75" y="184.4" width="2.73" height="1.2" fill="#ce9178"/><rect x="1185.39" y="184.4" width="4.55" height="1.2" fill="#9cdcfe"/><rect x="1189.94" y="184.4" width="0.91" height="1.2" fill="#d4d4d4"/><rect x="1190.85" y="184.4" width="4.55" height="1.2" fill="#ce9178"/><rect x="1195.40" y="184.4" width="0.91" height="1.2" fill="#808080"/><rect x="1169.92" y="186.3" width="0.91" height="1.2" fill="#808080"/><rect x="1170.83" y="186.3" width="3.64" height="1.2" fill="#569cd6"/><rect x="1175.38" y="186.3" width="4.55" height="1.2" fill="#9cdcfe"/><rect x="1179.93" y="186.3" width="0.91" height="1.2" fill="#d4d4d4"/><rect x="1180.84" y="186.3" width="2.73" height="1.2" fill="#ce9178"/><rect x="1184.48" y="186.3" width="2.73" height="1.2" fill="#9cdcfe"/><rect x="1187.21" y="186.3" width="0.91" height="1.2" fill="#d4d4d4"/><rect x="1188.12" y="186.3" width="4.55" height="1.2" fill="#ce9178"/><rect x="1193.58" y="186.3" width="2.73" height="1.2" fill="#9cdcfe"/><rect x="1196.31" y="186.3" width="0.91" height="1.2" fill="#d4d4d4"/><rect x="1197.22" y="186.3" width="7.28" height="1.2" fill="#ce9178"/><rect x="1204.50" y="186.3" width="0.91" height="1.2" fill="#808080"/><rect x="1169.92" y="190.0" width="0.91" height="1.2" fill="#808080"/><rect x="1170.83" y="190.0" width="3.64" height="1.2" fill="#569cd6"/><rect x="1175.38" y="190.0" width="4.55" height="1.2" fill="#9cdcfe"/><rect x="1179.93" y="190.0" width="0.91" height="1.2" fill="#d4d4d4"/><rect x="1180.84" y="190.0" width="2.73" height="1.2" fill="#ce9178"/><rect x="1183.57" y="190.0" width="0.91" height="1.2" fill="#808080"/><rect x="1169.92" y="191.9" width="0.91" height="1.2" fill="#808080"/><rect x="1170.83" y="191.9" width="3.64" height="1.2" fill="#569cd6"/><rect x="1175.38" y="191.9" width="3.64" height="1.2" fill="#9cdcfe"/><rect x="1179.02" y="191.9" width="0.91" height="1.2" fill="#d4d4d4"/><rect x="1179.93" y="191.9" width="3.64" height="1.2" fill="#ce9178"/><rect x="1184.48" y="191.9" width="4.55" height="1.2" fill="#9cdcfe"/><rect x="1189.03" y="191.9" width="0.91" height="1.2" fill="#d4d4d4"/><rect x="1189.94" y="191.9" width="6.37" height="1.2" fill="#ce9178"/><rect x="1196.31" y="191.9" width="0.91" height="1.2" fill="#808080"/><rect x="1169.92" y="193.7" width="0.91" height="1.2" fill="#808080"/><rect x="1170.83" y="193.7" width="4.55" height="1.2" fill="#569cd6"/><rect x="1176.29" y="193.7" width="3.64" height="1.2" fill="#9cdcfe"/><rect x="1179.93" y="193.7" width="0.91" height="1.2" fill="#d4d4d4"/><rect x="1180.84" y="193.7" width="5.46" height="1.2" fill="#ce9178"/><rect x="1187.21" y="193.7" width="2.73" height="1.2" fill="#9cdcfe"/><rect x="1189.94" y="193.7" width="0.91" height="1.2" fill="#d4d4d4"/><rect x="1190.85" y="193.7" width="3.64" height="1.2" fill="#ce9178"/><rect x="1194.49" y="193.7" width="0.91" height="1.2" fill="#808080"/><rect x="1169.92" y="195.6" width="0.91" height="1.2" fill="#808080"/><rect x="1170.83" y="195.6" width="2.73" height="1.2" fill="#569cd6"/><rect x="1174.47" y="195.6" width="2.73" height="1.2" fill="#9cdcfe"/><rect x="1177.20" y="195.6" width="0.91" height="1.2" fill="#d4d4d4"/><rect x="1178.11" y="195.6" width="7.28" height="1.2" fill="#ce9178"/><rect x="1186.30" y="195.6" width="2.73" height="1.2" fill="#9cdcfe"/><rect x="1189.03" y="195.6" width="0.91" height="1.2" fill="#d4d4d4"/><rect x="1189.94" y="195.6" width="2.73" height="1.2" fill="#ce9178"/><rect x="1192.67" y="195.6" width="0.91" height="1.2" fill="#808080"/><rect x="1169.92" y="197.5" width="0.91" height="1.2" fill="#808080"/><rect x="1170.83" y="197.5" width="5.46" height="1.2" fill="#569cd6"/><rect x="1177.20" y="197.5" width="2.73" height="1.2" fill="#9cdcfe"/><rect x="1179.93" y="197.5" width="0.91" height="1.2" fill="#d4d4d4"/><rect x="1180.84" y="197.5" width="4.55" height="1.2" fill="#ce9178"/><rect x="1186.30" y="197.5" width="3.64" height="1.2" fill="#9cdcfe"/><rect x="1189.94" y="197.5" width="0.91" height="1.2" fill="#d4d4d4"/><rect x="1190.85" y="197.5" width="2.73" height="1.2" fill="#ce9178"/><rect x="1193.58" y="197.5" width="0.91" height="1.2" fill="#808080"/><rect x="1169.92" y="199.4" width="0.91" height="1.2" fill="#808080"/><rect x="1170.83" y="199.4" width="3.64" height="1.2" fill="#569cd6"/><rect x="1175.38" y="199.4" width="3.64" height="1.2" fill="#9cdcfe"/><rect x="1179.02" y="199.4" width="0.91" height="1.2" fill="#d4d4d4"/><rect x="1179.93" y="199.4" width="6.37" height="1.2" fill="#ce9178"/><rect x="1187.21" y="199.4" width="3.64" height="1.2" fill="#9cdcfe"/><rect x="1190.85" y="199.4" width="0.91" height="1.2" fill="#d4d4d4"/><rect x="1191.76" y="199.4" width="3.64" height="1.2" fill="#ce9178"/><rect x="1195.40" y="199.4" width="0.91" height="1.2" fill="#808080"/><rect x="1169.92" y="203.1" width="0.91" height="1.2" fill="#808080"/><rect x="1170.83" y="203.1" width="6.37" height="1.2" fill="#569cd6"/><rect x="1178.11" y="203.1" width="1.82" height="1.2" fill="#9cdcfe"/><rect x="1179.93" y="203.1" width="0.91" height="1.2" fill="#d4d4d4"/><rect x="1180.84" y="203.1" width="5.46" height="1.2" fill="#ce9178"/><rect x="1187.21" y="203.1" width="4.55" height="1.2" fill="#9cdcfe"/><rect x="1191.76" y="203.1" width="0.91" height="1.2" fill="#d4d4d4"/><rect x="1192.67" y="203.1" width="5.46" height="1.2" fill="#ce9178"/><rect x="1198.13" y="203.1" width="0.91" height="1.2" fill="#808080"/><rect x="1169.92" y="205.0" width="0.91" height="1.2" fill="#808080"/><rect x="1170.83" y="205.0" width="5.46" height="1.2" fill="#569cd6"/><rect x="1177.20" y="205.0" width="4.55" height="1.2" fill="#9cdcfe"/><rect x="1181.75" y="205.0" width="0.91" height="1.2" fill="#d4d4d4"/><rect x="1182.66" y="205.0" width="7.28" height="1.2" fill="#ce9178"/><rect x="1190.85" y="205.0" width="4.55" height="1.2" fill="#9cdcfe"/><rect x="1195.40" y="205.0" width="0.91" height="1.2" fill="#d4d4d4"/><rect x="1196.31" y="205.0" width="2.73" height="1.2" fill="#ce9178"/><rect x="1199.04" y="205.0" width="0.91" height="1.2" fill="#808080"/><rect x="1169.92" y="206.8" width="0.91" height="1.2" fill="#808080"/><rect x="1170.83" y="206.8" width="3.64" height="1.2" fill="#569cd6"/><rect x="1175.38" y="206.8" width="2.73" height="1.2" fill="#9cdcfe"/><rect x="1178.11" y="206.8" width="0.91" height="1.2" fill="#d4d4d4"/><rect x="1179.02" y="206.8" width="5.46" height="1.2" fill="#ce9178"/><rect x="1184.48" y="206.8" width="0.91" height="1.2" fill="#808080"/><rect x="1169.92" y="208.7" width="0.91" height="1.2" fill="#808080"/><rect x="1170.83" y="208.7" width="3.64" height="1.2" fill="#569cd6"/><rect x="1175.38" y="208.7" width="1.82" height="1.2" fill="#9cdcfe"/><rect x="1177.20" y="208.7" width="0.91" height="1.2" fill="#d4d4d4"/><rect x="1178.11" y="208.7" width="2.73" height="1.2" fill="#ce9178"/><rect x="1181.75" y="208.7" width="1.82" height="1.2" fill="#9cdcfe"/><rect x="1183.57" y="208.7" width="0.91" height="1.2" fill="#d4d4d4"/><rect x="1184.48" y="208.7" width="6.37" height="1.2" fill="#ce9178"/><rect x="1190.85" y="208.7" width="0.91" height="1.2" fill="#808080"/><rect x="1169.92" y="210.6" width="0.91" height="1.2" fill="#808080"/><rect x="1170.83" y="210.6" width="3.64" height="1.2" fill="#569cd6"/><rect x="1175.38" y="210.6" width="3.64" height="1.2" fill="#9cdcfe"/><rect x="1179.02" y="210.6" width="0.91" height="1.2" fill="#d4d4d4"/><rect x="1179.93" y="210.6" width="6.37" height="1.2" fill="#ce9178"/><rect x="1187.21" y="210.6" width="1.82" height="1.2" fill="#9cdcfe"/><rect x="1189.03" y="210.6" width="0.91" height="1.2" fill="#d4d4d4"/><rect x="1189.94" y="210.6" width="2.73" height="1.2" fill="#ce9178"/><rect x="1192.67" y="210.6" width="0.91" height="1.2" fill="#808080"/><rect x="1169.92" y="212.4" width="0.91" height="1.2" fill="#808080"/><rect x="1170.83" y="212.4" width="3.64" height="1.2" fill="#569cd6"/><rect x="1175.38" y="212.4" width="2.73" height="1.2" fill="#9cdcfe"/><rect x="1178.11" y="212.4" width="0.91" height="1.2" fill="#d4d4d4"/><rect x="1179.02" y="212.4" width="7.28" height="1.2" fill="#ce9178"/><rect x="1187.21" y="212.4" width="3.64" height="1.2" fill="#9cdcfe"/><rect x="1190.85" y="212.4" width="0.91" height="1.2" fill="#d4d4d4"/><rect x="1191.76" y="212.4" width="4.55" height="1.2" fill="#ce9178"/><rect x="1197.22" y="212.4" width="3.64" height="1.2" fill="#9cdcfe"/><rect x="1200.86" y="212.4" width="0.91" height="1.2" fill="#d4d4d4"/><rect x="1201.77" y="212.4" width="5.46" height="1.2" fill="#ce9178"/><rect x="1207.23" y="212.4" width="0.91" height="1.2" fill="#808080"/><rect x="1169.92" y="216.2" width="0.91" height="1.2" fill="#808080"/><rect x="1170.83" y="216.2" width="2.73" height="1.2" fill="#569cd6"/><rect x="1174.47" y="216.2" width="4.55" height="1.2" fill="#9cdcfe"/><rect x="1179.02" y="216.2" width="0.91" height="1.2" fill="#d4d4d4"/><rect x="1179.93" y="216.2" width="5.46" height="1.2" fill="#ce9178"/><rect x="1185.39" y="216.2" width="0.91" height="1.2" fill="#808080"/><rect x="1169.92" y="218.1" width="0.91" height="1.2" fill="#808080"/><rect x="1170.83" y="218.1" width="5.46" height="1.2" fill="#569cd6"/><rect x="1177.20" y="218.1" width="1.82" height="1.2" fill="#9cdcfe"/><rect x="1179.02" y="218.1" width="0.91" height="1.2" fill="#d4d4d4"/><rect x="1179.93" y="218.1" width="3.64" height="1.2" fill="#ce9178"/><rect x="1184.48" y="218.1" width="1.82" height="1.2" fill="#9cdcfe"/><rect x="1186.30" y="218.1" width="0.91" height="1.2" fill="#d4d4d4"/><rect x="1187.21" y="218.1" width="7.28" height="1.2" fill="#ce9178"/><rect x="1194.49" y="218.1" width="0.91" height="1.2" fill="#808080"/><rect x="1169.92" y="219.9" width="0.91" height="1.2" fill="#808080"/><rect x="1170.83" y="219.9" width="4.55" height="1.2" fill="#569cd6"/><rect x="1176.29" y="219.9" width="4.55" height="1.2" fill="#9cdcfe"/><rect x="1180.84" y="219.9" width="0.91" height="1.2" fill="#d4d4d4"/><rect x="1181.75" y="219.9" width="3.64" height="1.2" fill="#ce9178"/><rect x="1186.30" y="219.9" width="1.82" height="1.2" fill="#9cdcfe"/><rect x="1188.12" y="219.9" width="0.91" height="1.2" fill="#d4d4d4"/><rect x="1189.03" y="219.9" width="3.64" height="1.2" fill="#ce9178"/><rect x="1192.67" y="219.9" width="0.91" height="1.2" fill="#808080"/><rect x="1169.92" y="221.8" width="0.91" height="1.2" fill="#808080"/><rect x="1170.83" y="221.8" width="6.37" height="1.2" fill="#569cd6"/><rect x="1178.11" y="221.8" width="1.82" height="1.2" fill="#9cdcfe"/><rect x="1179.93" y="221.8" width="0.91" height="1.2" fill="#d4d4d4"/><rect x="1180.84" y="221.8" width="6.37" height="1.2" fill="#ce9178"/><rect x="1188.12" y="221.8" width="3.64" height="1.2" fill="#9cdcfe"/><rect x="1191.76" y="221.8" width="0.91" height="1.2" fill="#d4d4d4"/><rect x="1192.67" y="221.8" width="7.28" height="1.2" fill="#ce9178"/><rect x="1199.95" y="221.8" width="0.91" height="1.2" fill="#808080"/><rect x="1169.92" y="223.7" width="0.91" height="1.2" fill="#808080"/><rect x="1170.83" y="223.7" width="2.73" height="1.2" fill="#569cd6"/><rect x="1174.47" y="223.7" width="3.64" height="1.2" fill="#9cdcfe"/><rect x="1178.11" y="223.7" width="0.91" height="1.2" fill="#d4d4d4"/><rect x="1179.02" y="223.7" width="6.37" height="1.2" fill="#ce9178"/><rect x="1186.30" y="223.7" width="3.64" height="1.2" fill="#9cdcfe"/><rect x="1189.94" y="223.7" width="0.91" height="1.2" fill="#d4d4d4"/><rect x="1190.85" y="223.7" width="3.64" height="1.2" fill="#ce9178"/><rect x="1194.49" y="223.7" width="0.91" height="1.2" fill="#808080"/><rect x="1169.92" y="225.5" width="0.91" height="1.2" fill="#808080"/><rect x="1170.83" y="225.5" width="4.55" height="1.2" fill="#569cd6"/><rect x="1176.29" y="225.5" width="3.64" height="1.2" fill="#9cdcfe"/><rect x="1179.93" y="225.5" width="0.91" height="1.2" fill="#d4d4d4"/><rect x="1180.84" y="225.5" width="7.28" height="1.2" fill="#ce9178"/><rect x="1189.03" y="225.5" width="2.73" height="1.2" fill="#9cdcfe"/><rect x="1191.76" y="225.5" width="0.91" height="1.2" fill="#d4d4d4"/><rect x="1192.67" y="225.5" width="6.37" height="1.2" fill="#ce9178"/><rect x="1199.95" y="225.5" width="2.73" height="1.2" fill="#9cdcfe"/><rect x="1202.68" y="225.5" width="0.91" height="1.2" fill="#d4d4d4"/><rect x="1203.59" y="225.5" width="3.64" height="1.2" fill="#ce9178"/><rect x="1207.23" y="225.5" width="0.91" height="1.2" fill="#808080"/><rect x="1169.92" y="229.3" width="0.91" height="1.2" fill="#808080"/><rect x="1170.83" y="229.3" width="5.46" height="1.2" fill="#569cd6"/><rect x="1177.20" y="229.3" width="2.73" height="1.2" fill="#9cdcfe"/><rect x="1179.93" y="229.3" width="0.91" height="1.2" fill="#d4d4d4"/><rect x="1180.84" y="229.3" width="3.64" height="1.2" fill="#ce9178"/><rect x="1185.39" y="229.3" width="4.55" height="1.2" fill="#9cdcfe"/><rect x="1189.94" y="229.3" width="0.91" height="1.2" fill="#d4d4d4"/><rect x="1190.85" y="229.3" width="4.55" height="1.2" fill="#ce9178"/><rect x="1195.40" y="229.3" width="0.91" height="1.2" fill="#808080"/><rect x="1169.92" y="231.1" width="0.91" height="1.2" fill="#808080"/><rect x="1170.83" y="231.1" width="2.73" height="1.2" fill="#569cd6"/><rect x="1174.47" y="231.1" width="3.64" height="1.2" fill="#9cdcfe"/><rect x="1178.11" y="231.1" width="0.91" height="1.2" fill="#d4d4d4"/><rect x="1179.02" y="231.1" width="5.46" height="1.2" fill="#ce9178"/><rect x="1185.39" y="231.1" width="3.64" height="1.2" fill="#9cdcfe"/><rect x="1189.03" y="231.1" width="0.91" height="1.2" fill="#d4d4d4"/><rect x="1189.94" y="231.1" width="3.64" height="1.2" fill="#ce9178"/><rect x="1194.49" y="231.1" width="3.64" height="1.2" fill="#9cdcfe"/><rect x="1198.13" y="231.1" width="0.91" height="1.2" fill="#d4d4d4"/><rect x="1199.04" y="231.1" width="5.46" height="1.2" fill="#ce9178"/><rect x="1204.50" y="231.1" width="0.91" height="1.2" fill="#808080"/><rect x="1169.92" y="233.0" width="0.91" height="1.2" fill="#808080"/><rect x="1170.83" y="233.0" width="4.55" height="1.2" fill="#569cd6"/><rect x="1176.29" y="233.0" width="3.64" height="1.2" fill="#9cdcfe"/><rect x="1179.93" y="233.0" width="0.91" height="1.2" fill="#d4d4d4"/><rect x="1180.84" y="233.0" width="2.73" height="1.2" fill="#ce9178"/><rect x="1184.48" y="233.0" width="2.73" height="1.2" fill="#9cdcfe"/><rect x="1187.21" y="233.0" width="0.91" height="1.2" fill="#d4d4d4"/><rect x="1188.12" y="233.0" width="2.73" height="1.2" fill="#ce9178"/><rect x="1190.85" y="233.0" width="0.91" height="1.2" fill="#808080"/><rect x="1169.92" y="234.9" width="0.91" height="1.2" fill="#808080"/><rect x="1170.83" y="234.9" width="3.64" height="1.2" fill="#569cd6"/><rect x="1175.38" y="234.9" width="3.64" height="1.2" fill="#9cdcfe"/><rect x="1179.02" y="234.9" width="0.91" height="1.2" fill="#d4d4d4"/><rect x="1179.93" y="234.9" width="3.64" height="1.2" fill="#ce9178"/><rect x="1184.48" y="234.9" width="4.55" height="1.2" fill="#9cdcfe"/><rect x="1189.03" y="234.9" width="0.91" height="1.2" fill="#d4d4d4"/><rect x="1189.94" y="234.9" width="6.37" height="1.2" fill="#ce9178"/><rect x="1196.31" y="234.9" width="0.91" height="1.2" fill="#808080"/><rect x="1169.92" y="236.8" width="0.91" height="1.2" fill="#808080"/><rect x="1170.83" y="236.8" width="6.37" height="1.2" fill="#569cd6"/><rect x="1178.11" y="236.8" width="4.55" height="1.2" fill="#9cdcfe"/><rect x="1182.66" y="236.8" width="0.91" height="1.2" fill="#d4d4d4"/><rect x="1183.57" y="236.8" width="4.55" height="1.2" fill="#ce9178"/><rect x="1189.03" y="236.8" width="1.82" height="1.2" fill="#9cdcfe"/><rect x="1190.85" y="236.8" width="0.91" height="1.2" fill="#d4d4d4"/><rect x="1191.76" y="236.8" width="2.73" height="1.2" fill="#ce9178"/><rect x="1194.49" y="236.8" width="0.91" height="1.2" fill="#808080"/><rect x="1169.92" y="238.6" width="0.91" height="1.2" fill="#808080"/><rect x="1170.83" y="238.6" width="5.46" height="1.2" fill="#569cd6"/><rect x="1177.20" y="238.6" width="2.73" height="1.2" fill="#9cdcfe"/><rect x="1179.93" y="238.6" width="0.91" height="1.2" fill="#d4d4d4"/><rect x="1180.84" y="238.6" width="5.46" height="1.2" fill="#ce9178"/><rect x="1187.21" y="238.6" width="2.73" height="1.2" fill="#9cdcfe"/><rect x="1189.94" y="238.6" width="0.91" height="1.2" fill="#d4d4d4"/><rect x="1190.85" y="238.6" width="5.46" height="1.2" fill="#ce9178"/><rect x="1197.22" y="238.6" width="3.64" height="1.2" fill="#9cdcfe"/><rect x="1200.86" y="238.6" width="0.91" height="1.2" fill="#d4d4d4"/><rect x="1201.77" y="238.6" width="2.73" height="1.2" fill="#ce9178"/><rect x="1204.50" y="238.6" width="0.91" height="1.2" fill="#808080"/><rect x="1169.92" y="242.4" width="0.91" height="1.2" fill="#808080"/><rect x="1170.83" y="242.4" width="5.46" height="1.2" fill="#569cd6"/><rect x="1177.20" y="242.4" width="1.82" height="1.2" fill="#9cdcfe"/><rect x="1179.02" y="242.4" width="0.91" height="1.2" fill="#d4d4d4"/><rect x="1179.93" y="242.4" width="3.64" height="1.2" fill="#ce9178"/><rect x="1183.57" y="242.4" width="0.91" height="1.2" fill="#808080"/><rect x="1169.92" y="244.2" width="0.91" height="1.2" fill="#808080"/><rect x="1170.83" y="244.2" width="3.64" height="1.2" fill="#569cd6"/><rect x="1175.38" y="244.2" width="1.82" height="1.2" fill="#9cdcfe"/><rect x="1177.20" y="244.2" width="0.91" height="1.2" fill="#d4d4d4"/><rect x="1178.11" y="244.2" width="3.64" height="1.2" fill="#ce9178"/><rect x="1182.66" y="244.2" width="4.55" height="1.2" fill="#9cdcfe"/><rect x="1187.21" y="244.2" width="0.91" height="1.2" fill="#d4d4d4"/><rect x="1188.12" y="244.2" width="7.28" height="1.2" fill="#ce9178"/><rect x="1196.31" y="244.2" width="2.73" height="1.2" fill="#9cdcfe"/><rect x="1199.04" y="244.2" width="0.91" height="1.2" fill="#d4d4d4"/><rect x="1199.95" y="244.2" width="6.37" height="1.2" fill="#ce9178"/><rect x="1206.32" y="244.2" width="0.91" height="1.2" fill="#808080"/><rect x="1169.92" y="246.1" width="0.91" height="1.2" fill="#808080"/><rect x="1170.83" y="246.1" width="6.37" height="1.2" fill="#569cd6"/><rect x="1178.11" y="246.1" width="3.64" height="1.2" fill="#9cdcfe"/><rect x="1181.75" y="246.1" width="0.91" height="1.2" fill="#d4d4d4"/><rect x="1182.66" y="246.1" width="3.64" height="1.2" fill="#ce9178"/><rect x="1187.21" y="246.1" width="2.73" height="1.2" fill="#9cdcfe"/><rect x="1189.94" y="246.1" width="0.91" height="1.2" fill="#d4d4d4"/><rect x="1190.85" y="246.1" width="2.73" height="1.2" fill="#ce9178"/><rect x="1193.58" y="246.1" width="0.91" height="1.2" fill="#808080"/><rect x="1169.92" y="248.0" width="0.91" height="1.2" fill="#808080"/><rect x="1170.83" y="248.0" width="2.73" height="1.2" fill="#569cd6"/><rect x="1174.47" y="248.0" width="1.82" height="1.2" fill="#9cdcfe"/><rect x="1176.29" y="248.0" width="0.91" height="1.2" fill="#d4d4d4"/><rect x="1177.20" y="248.0" width="6.37" height="1.2" fill="#ce9178"/><rect x="1184.48" y="248.0" width="2.73" height="1.2" fill="#9cdcfe"/><rect x="1187.21" y="248.0" width="0.91" height="1.2" fill="#d4d4d4"/><rect x="1188.12" y="248.0" width="5.46" height="1.2" fill="#ce9178"/><rect x="1194.49" y="248.0" width="2.73" height="1.2" fill="#9cdcfe"/><rect x="1197.22" y="248.0" width="0.91" height="1.2" fill="#d4d4d4"/><rect x="1198.13" y="248.0" width="3.64" height="1.2" fill="#ce9178"/><rect x="1201.77" y="248.0" width="0.91" height="1.2" fill="#808080"/><rect x="1169.92" y="249.8" width="0.91" height="1.2" fill="#808080"/><rect x="1170.83" y="249.8" width="2.73" height="1.2" fill="#569cd6"/><rect x="1174.47" y="249.8" width="3.64" height="1.2" fill="#9cdcfe"/><rect x="1178.11" y="249.8" width="0.91" height="1.2" fill="#d4d4d4"/><rect x="1179.02" y="249.8" width="6.37" height="1.2" fill="#ce9178"/><rect x="1185.39" y="249.8" width="0.91" height="1.2" fill="#808080"/><rect x="1169.92" y="251.7" width="0.91" height="1.2" fill="#808080"/><rect x="1170.83" y="251.7" width="3.64" height="1.2" fill="#569cd6"/><rect x="1175.38" y="251.7" width="3.64" height="1.2" fill="#9cdcfe"/><rect x="1179.02" y="251.7" width="0.91" height="1.2" fill="#d4d4d4"/><rect x="1179.93" y="251.7" width="4.55" height="1.2" fill="#ce9178"/><rect x="1185.39" y="251.7" width="4.55" height="1.2" fill="#9cdcfe"/><rect x="1189.94" y="251.7" width="0.91" height="1.2" fill="#d4d4d4"/><rect x="1190.85" y="251.7" width="3.64" height="1.2" fill="#ce9178"/><rect x="1195.40" y="251.7" width="1.82" height="1.2" fill="#9cdcfe"/><rect x="1197.22" y="251.7" width="0.91" height="1.2" fill="#d4d4d4"/><rect x="1198.13" y="251.7" width="7.28" height="1.2" fill="#ce9178"/><rect x="1205.41" y="251.7" width="0.91" height="1.2" fill="#808080"/><rect x="1169.92" y="255.5" width="0.91" height="1.2" fill="#808080"/><rect x="1170.83" y="255.5" width="4.55" height="1.2" fill="#569cd6"/><rect x="1176.29" y="255.5" width="4.55" height="1.2" fill="#9cdcfe"/><rect x="1180.84" y="255.5" width="0.91" height="1.2" fill="#d4d4d4"/><rect x="1181.75" y="255.5" width="6.37" height="1.2" fill="#ce9178"/><rect x="1189.03" y="255.5" width="2.73" height="1.2" fill="#9cdcfe"/><rect x="1191.76" y="255.5" width="0.91" height="1.2" fill="#d4d4d4"/><rect x="1192.67" y="255.5" width="6.37" height="1.2" fill="#ce9178"/><rect x="1199.04" y="255.5" width="0.91" height="1.2" fill="#808080"/><rect x="1169.92" y="257.3" width="0.91" height="1.2" fill="#808080"/><rect x="1170.83" y="257.3" width="3.64" height="1.2" fill="#569cd6"/><rect x="1175.38" y="257.3" width="1.82" height="1.2" fill="#9cdcfe"/><rect x="1177.20" y="257.3" width="0.91" height="1.2" fill="#d4d4d4"/><rect x="1178.11" y="257.3" width="5.46" height="1.2" fill="#ce9178"/><rect x="1184.48" y="257.3" width="2.73" height="1.2" fill="#9cdcfe"/><rect x="1187.21" y="257.3" width="0.91" height="1.2" fill="#d4d4d4"/><rect x="1188.12" y="257.3" width="6.37" height="1.2" fill="#ce9178"/><rect x="1195.40" y="257.3" width="1.82" height="1.2" fill="#9cdcfe"/><rect x="1197.22" y="257.3" width="0.91" height="1.2" fill="#d4d4d4"/><rect x="1198.13" y="257.3" width="3.64" height="1.2" fill="#ce9178"/><rect x="1201.77" y="257.3" width="0.91" height="1.2" fill="#808080"/><rect x="1169.92" y="259.2" width="0.91" height="1.2" fill="#808080"/><rect x="1170.83" y="259.2" width="3.64" height="1.2" fill="#569cd6"/><rect x="1175.38" y="259.2" width="1.82" height="1.2" fill="#9cdcfe"/><rect x="1177.20" y="259.2" width="0.91" height="1.2" fill="#d4d4d4"/><rect x="1178.11" y="259.2" width="6.37" height="1.2" fill="#ce9178"/><rect x="1184.48" y="259.2" width="0.91" height="1.2" fill="#808080"/><rect x="1169.92" y="261.1" width="0.91" height="1.2" fill="#808080"/><rect x="1170.83" y="261.1" width="2.73" height="1.2" fill="#569cd6"/><rect x="1174.47" y="261.1" width="4.55" height="1.2" fill="#9cdcfe"/><rect x="1179.02" y="261.1" width="0.91" height="1.2" fill="#d4d4d4"/><rect x="1179.93" y="261.1" width="2.73" height="1.2" fill="#ce9178"/><rect x="1183.57" y="261.1" width="1.82" height="1.2" fill="#9cdcfe"/><rect x="1185.39" y="261.1" width="0.91" height="1.2" fill="#d4d4d4"/><rect x="1186.30" y="261.1" width="3.64" height="1.2" fill="#ce9178"/><rect x="1189.94" y="261.1" width="0.91" height="1.2" fill="#808080"/><rect x="1169.92" y="262.9" width="0.91" height="1.2" fill="#808080"/><rect x="1170.83" y="262.9" width="3.64" height="1.2" fill="#569cd6"/><rect x="1175.38" y="262.9" width="1.82" height="1.2" fill="#9cdcfe"/><rect x="1177.20" y="262.9" width="0.91" height="1.2" fill="#d4d4d4"/><rect x="1178.11" y="262.9" width="6.37" height="1.2" fill="#ce9178"/><rect x="1184.48" y="262.9" width="0.91" height="1.2" fill="#808080"/><rect x="1169.92" y="264.8" width="0.91" height="1.2" fill="#808080"/><rect x="1170.83" y="264.8" width="5.46" height="1.2" fill="#569cd6"/><rect x="1177.20" y="264.8" width="1.82" height="1.2" fill="#9cdcfe"/><rect x="1179.02" y="264.8" width="0.91" height="1.2" fill="#d4d4d4"/><rect x="1179.93" y="264.8" width="5.46" height="1.2" fill="#ce9178"/><rect x="1186.30" y="264.8" width="3.64" height="1.2" fill="#9cdcfe"/><rect x="1189.94" y="264.8" width="0.91" height="1.2" fill="#d4d4d4"/><rect x="1190.85" y="264.8" width="6.37" height="1.2" fill="#ce9178"/><rect x="1198.13" y="264.8" width="2.73" height="1.2" fill="#9cdcfe"/><rect x="1200.86" y="264.8" width="0.91" height="1.2" fill="#d4d4d4"/><rect x="1201.77" y="264.8" width="7.28" height="1.2" fill="#ce9178"/><rect x="1209.05" y="264.8" width="0.91" height="1.2" fill="#808080"/><rect x="1169.92" y="268.5" width="0.91" height="1.2" fill="#808080"/><rect x="1170.83" y="268.5" width="4.55" height="1.2" fill="#569cd6"/><rect x="1176.29" y="268.5" width="4.55" height="1.2" fill="#9cdcfe"/><rect x="1180.84" y="268.5" width="0.91" height="1.2" fill="#d4d4d4"/><rect x="1181.75" y="268.5" width="6.37" height="1.2" fill="#ce9178"/><rect x="1188.12" y="268.5" width="0.91" height="1.2" fill="#808080"/><rect x="1169.92" y="270.4" width="0.91" height="1.2" fill="#808080"/><rect x="1170.83" y="270.4" width="3.64" height="1.2" fill="#569cd6"/><rect x="1175.38" y="270.4" width="3.64" height="1.2" fill="#9cdcfe"/><rect x="1179.02" y="270.4" width="0.91" height="1.2" fill="#d4d4d4"/><rect x="1179.93" y="270.4" width="6.37" height="1.2" fill="#ce9178"/><rect x="1187.21" y="270.4" width="2.73" height="1.2" fill="#9cdcfe"/><rect x="1189.94" y="270.4" width="0.91" height="1.2" fill="#d4d4d4"/><rect x="1190.85" y="270.4" width="5.46" height="1.2" fill="#ce9178"/><rect x="1197.22" y="270.4" width="2.73" height="1.2" fill="#9cdcfe"/><rect x="1199.95" y="270.4" width="0.91" height="1.2" fill="#d4d4d4"/><rect x="1200.86" y="270.4" width="5.46" height="1.2" fill="#ce9178"/><rect x="1206.32" y="270.4" width="0.91" height="1.2" fill="#808080"/><rect x="1169.92" y="272.3" width="0.91" height="1.2" fill="#808080"/><rect x="1170.83" y="272.3" width="2.73" height="1.2" fill="#569cd6"/><rect x="1174.47" y="272.3" width="3.64" height="1.2" fill="#9cdcfe"/><rect x="1178.11" y="272.3" width="0.91" height="1.2" fill="#d4d4d4"/><rect x="1179.02" y="272.3" width="2.73" height="1.2" fill="#ce9178"/><rect x="1181.75" y="272.3" width="0.91" height="1.2" fill="#808080"/><rect x="1169.92" y="274.1" width="0.91" height="1.2" fill="#808080"/><rect x="1170.83" y="274.1" width="3.64" height="1.2" fill="#569cd6"/><rect x="1175.38" y="274.1" width="2.73" height="1.2" fill="#9cdcfe"/><rect x="1178.11" y="274.1" width="0.91" height="1.2" fill="#d4d4d4"/><rect x="1179.02" y="274.1" width="7.28" height="1.2" fill="#ce9178"/><rect x="1187.21" y="274.1" width="3.64" height="1.2" fill="#9cdcfe"/><rect x="1190.85" y="274.1" width="0.91" height="1.2" fill="#d4d4d4"/><rect x="1191.76" y="274.1" width="2.73" height="1.2" fill="#ce9178"/><rect x="1194.49" y="274.1" width="0.91" height="1.2" fill="#808080"/><rect x="1169.92" y="276.0" width="0.91" height="1.2" fill="#808080"/><rect x="1170.83" y="276.0" width="3.64" height="1.2" fill="#569cd6"/><rect x="1175.38" y="276.0" width="3.64" height="1.2" fill="#9cdcfe"/><rect x="1179.02" y="276.0" width="0.91" height="1.2" fill="#d4d4d4"/><rect x="1179.93" y="276.0" width="3.64" height="1.2" fill="#ce9178"/><rect x="1184.48" y="276.0" width="3.64" height="1.2" fill="#9cdcfe"/><rect x="1188.12" y="276.0" width="0.91" height="1.2" fill="#d4d4d4"/><rect x="1189.03" y="276.0" width="3.64" height="1.2" fill="#ce9178"/><rect x="1192.67" y="276.0" width="0.91" height="1.2" fill="#808080"/><rect x="1169.92" y="277.9" width="0.91" height="1.2" fill="#808080"/><rect x="1170.83" y="277.9" width="5.46" height="1.2" fill="#569cd6"/><rect x="1177.20" y="277.9" width="1.82" height="1.2" fill="#9cdcfe"/><rect x="1179.02" y="277.9" width="0.91" height="1.2" fill="#d4d4d4"/><rect x="1179.93" y="277.9" width="5.46" height="1.2" fill="#ce9178"/><rect x="1186.30" y="277.9" width="4.55" height="1.2" fill="#9cdcfe"/><rect x="1190.85" y="277.9" width="0.91" height="1.2" fill="#d4d4d4"/><rect x="1191.76" y="277.9" width="3.64" height="1.2" fill="#ce9178"/><rect x="1195.40" y="277.9" width="0.91" height="1.2" fill="#808080"/><rect x="1169.92" y="281.6" width="0.91" height="1.2" fill="#808080"/><rect x="1170.83" y="281.6" width="3.64" height="1.2" fill="#569cd6"/><rect x="1175.38" y="281.6" width="4.55" height="1.2" fill="#9cdcfe"/><rect x="1179.93" y="281.6" width="0.91" height="1.2" fill="#d4d4d4"/><rect x="1180.84" y="281.6" width="6.37" height="1.2" fill="#ce9178"/><rect x="1187.21" y="281.6" width="0.91" height="1.2" fill="#808080"/><rect x="1169.92" y="283.5" width="0.91" height="1.2" fill="#808080"/><rect x="1170.83" y="283.5" width="5.46" height="1.2" fill="#569cd6"/><rect x="1177.20" y="283.5" width="2.73" height="1.2" fill="#9cdcfe"/><rect x="1179.93" y="283.5" width="0.91" height="1.2" fill="#d4d4d4"/><rect x="1180.84" y="283.5" width="4.55" height="1.2" fill="#ce9178"/><rect x="1186.30" y="283.5" width="3.64" height="1.2" fill="#9cdcfe"/><rect x="1189.94" y="283.5" width="0.91" height="1.2" fill="#d4d4d4"/><rect x="1190.85" y="283.5" width="2.73" height="1.2" fill="#ce9178"/><rect x="1193.58" y="283.5" width="0.91" height="1.2" fill="#808080"/><rect x="1169.92" y="285.4" width="0.91" height="1.2" fill="#808080"/><rect x="1170.83" y="285.4" width="4.55" height="1.2" fill="#569cd6"/><rect x="1176.29" y="285.4" width="4.55" height="1.2" fill="#9cdcfe"/><rect x="1180.84" y="285.4" width="0.91" height="1.2" fill="#d4d4d4"/><rect x="1181.75" y="285.4" width="5.46" height="1.2" fill="#ce9178"/><rect x="1187.21" y="285.4" width="0.91" height="1.2" fill="#808080"/><rect x="1169.92" y="287.2" width="0.91" height="1.2" fill="#808080"/><rect x="1170.83" y="287.2" width="2.73" height="1.2" fill="#569cd6"/><rect x="1174.47" y="287.2" width="3.64" height="1.2" fill="#9cdcfe"/><rect x="1178.11" y="287.2" width="0.91" height="1.2" fill="#d4d4d4"/><rect x="1179.02" y="287.2" width="6.37" height="1.2" fill="#ce9178"/><rect x="1186.30" y="287.2" width="1.82" height="1.2" fill="#9cdcfe"/><rect x="1188.12" y="287.2" width="0.91" height="1.2" fill="#d4d4d4"/><rect x="1189.03" y="287.2" width="2.73" height="1.2" fill="#ce9178"/><rect x="1191.76" y="287.2" width="0.91" height="1.2" fill="#808080"/><rect x="1169.92" y="289.1" width="0.91" height="1.2" fill="#808080"/><rect x="1170.83" y="289.1" width="3.64" height="1.2" fill="#569cd6"/><rect x="1175.38" y="289.1" width="1.82" height="1.2" fill="#9cdcfe"/><rect x="1177.20" y="289.1" width="0.91" height="1.2" fill="#d4d4d4"/><rect x="1178.11" y="289.1" width="2.73" height="1.2" fill="#ce9178"/><rect x="1181.75" y="289.1" width="3.64" height="1.2" fill="#9cdcfe"/><rect x="1185.39" y="289.1" width="0.91" height="1.2" fill="#d4d4d4"/><rect x="1186.30" y="289.1" width="4.55" height="1.2" fill="#ce9178"/><rect x="1191.76" y="289.1" width="1.82" height="1.2" fill="#9cdcfe"/><rect x="1193.58" y="289.1" width="0.91" height="1.2" fill="#d4d4d4"/><rect x="1194.49" y="289.1" width="8.19" height="1.2" fill="#ce9178"/><rect x="1202.68" y="289.1" width="0.91" height="1.2" fill="#808080"/><rect x="1166.28" y="291.0" width="0.91" height="1.2" fill="#808080"/><rect x="1167.19" y="291.0" width="3.64" height="1.2" fill="#569cd6"/><rect x="1170.83" y="291.0" width="0.91" height="1.2" fill="#808080"/><rect x="1166.28" y="292.9" width="0.91" height="1.2" fill="#808080"/><rect x="1167.19" y="292.9" width="3.64" height="1.2" fill="#569cd6"/><rect x="1171.74" y="292.9" width="3.64" height="1.2" fill="#9cdcfe"/><rect x="1175.38" y="292.9" width="0.91" height="1.2" fill="#d4d4d4"/><rect x="1176.29" y="292.9" width="5.46" height="1.2" fill="#ce9178"/><rect x="1182.66" y="292.9" width="2.73" height="1.2" fill="#9cdcfe"/><rect x="1185.39" y="292.9" width="0.91" height="1.2" fill="#d4d4d4"/><rect x="1186.30" y="292.9" width="6.37" height="1.2" fill="#ce9178"/><rect x="1192.67" y="292.9" width="0.91" height="1.2" fill="#808080"/><rect x="1169.92" y="294.7" width="0.91" height="1.2" fill="#808080"/><rect x="1170.83" y="294.7" width="6.37" height="1.2" fill="#569cd6"/><rect x="1178.11" y="294.7" width="3.64" height="1.2" fill="#9cdcfe"/><rect x="1181.75" y="294.7" width="0.91" height="1.2" fill="#d4d4d4"/><rect x="1182.66" y="294.7" width="2.73" height="1.2" fill="#ce9178"/><rect x="1185.39" y="294.7" width="0.91" height="1.2" fill="#808080"/><rect x="1171.74" y="296.6" width="0.91" height="1.2" fill="#808080"/><rect x="1172.65" y="296.6" width="4.55" height="1.2" fill="#569cd6"/><rect x="1178.11" y="296.6" width="2.73" height="1.2" fill="#9cdcfe"/><rect x="1180.84" y="296.6" width="0.91" height="1.2" fill="#d4d4d4"/><rect x="1181.75" y="296.6" width="3.64" height="1.2" fill="#ce9178"/><rect x="1185.39" y="296.6" width="0.91" height="1.2" fill="#808080"/><rect x="1171.74" y="298.5" width="0.91" height="1.2" fill="#808080"/><rect x="1172.65" y="298.5" width="2.73" height="1.2" fill="#569cd6"/><rect x="1176.29" y="298.5" width="1.82" height="1.2" fill="#9cdcfe"/><rect x="1178.11" y="298.5" width="0.91" height="1.2" fill="#d4d4d4"/><rect x="1179.02" y="298.5" width="4.55" height="1.2" fill="#ce9178"/><rect x="1183.57" y="298.5" width="0.91" height="1.2" fill="#808080"/><rect x="1166.28" y="300.3" width="0.91" height="1.2" fill="#808080"/><rect x="1167.19" y="300.3" width="2.73" height="1.2" fill="#569cd6"/><rect x="1170.83" y="300.3" width="1.82" height="1.2" fill="#9cdcfe"/><rect x="1172.65" y="300.3" width="0.91" height="1.2" fill="#d4d4d4"/><rect x="1173.56" y="300.3" width="6.37" height="1.2" fill="#ce9178"/><rect x="1180.84" y="300.3" width="2.73" height="1.2" fill="#9cdcfe"/><rect x="1183.57" y="300.3" width="0.91" height="1.2" fill="#d4d4d4"/><rect x="1184.48" y="300.3" width="2.73" height="1.2" fill="#ce9178"/><rect x="1187.21" y="300.3" width="0.91" height="1.2" fill="#808080"/><rect x="1169.92" y="302.2" width="0.91" height="1.2" fill="#808080"/><rect x="1170.83" y="302.2" width="4.55" height="1.2" fill="#569cd6"/><rect x="1176.29" y="302.2" width="4.55" height="1.2" fill="#9cdcfe"/><rect x="1180.84" y="302.2" width="0.91" height="1.2" fill="#d4d4d4"/><rect x="1181.75" y="302.2" width="2.73" height="1.2" fill="#ce9178"/><rect x="1184.48" y="302.2" width="0.91" height="1.2" fill="#808080"/><rect x="1171.74" y="304.1" width="0.91" height="1.2" fill="#808080"/><rect x="1172.65" y="304.1" width="4.55" height="1.2" fill="#569cd6"/><rect x="1178.11" y="304.1" width="4.55" height="1.2" fill="#9cdcfe"/><rect x="1182.66" y="304.1" width="0.91" height="1.2" fill="#d4d4d4"/><rect x="1183.57" y="304.1" width="3.64" height="1.2" fill="#ce9178"/><rect x="1188.12" y="304.1" width="2.73" height="1.2" fill="#9cdcfe"/><rect x="1190.85" y="304.1" width="0.91" height="1.2" fill="#d4d4d4"/><rect x="1191.76" y="304.1" width="2.73" height="1.2" fill="#ce9178"/><rect x="1194.49" y="304.1" width="0.91" height="1.2" fill="#808080"/><rect x="1171.74" y="305.9" width="0.91" height="1.2" fill="#808080"/><rect x="1172.65" y="305.9" width="6.37" height="1.2" fill="#569cd6"/><rect x="1179.93" y="305.9" width="1.82" height="1.2" fill="#9cdcfe"/><rect x="1181.75" y="305.9" width="0.91" height="1.2" fill="#d4d4d4"/><rect x="1182.66" y="305.9" width="2.73" height="1.2" fill="#ce9178"/><rect x="1186.30" y="305.9" width="3.64" height="1.2" fill="#9cdcfe"/><rect x="1189.94" y="305.9" width="0.91" height="1.2" fill="#d4d4d4"/><rect x="1190.85" y="305.9" width="2.73" height="1.2" fill="#ce9178"/><rect x="1193.58" y="305.9" width="0.91" height="1.2" fill="#808080"/><rect x="1166.28" y="307.8" width="0.91" height="1.2" fill="#808080"/><rect x="1167.19" y="307.8" width="3.64" height="1.2" fill="#569cd6"/><rect x="1171.74" y="307.8" width="3.64" height="1.2" fill="#9cdcfe"/><rect x="1175.38" y="307.8" width="0.91" height="1.2" fill="#d4d4d4"/><rect x="1176.29" y="307.8" width="4.55" height="1.2" fill="#ce9178"/><rect x="1180.84" y="307.8" width="0.91" height="1.2" fill="#808080"/><rect x="1169.92" y="309.7" width="0.91" height="1.2" fill="#808080"/><rect x="1170.83" y="309.7" width="6.37" height="1.2" fill="#569cd6"/><rect x="1178.11" y="309.7" width="3.64" height="1.2" fill="#9cdcfe"/><rect x="1181.75" y="309.7" width="0.91" height="1.2" fill="#d4d4d4"/><rect x="1182.66" y="309.7" width="5.46" height="1.2" fill="#ce9178"/><rect x="1188.12" y="309.7" width="0.91" height="1.2" fill="#808080"/><rect x="1171.74" y="311.6" width="0.91" height="1.2" fill="#808080"/><rect x="1172.65" y="311.6" width="6.37" height="1.2" fill="#569cd6"/><rect x="1179.93" y="311.6" width="3.64" height="1.2" fill="#9cdcfe"/><rect x="1183.57" y="311.6" width="0.91" height="1.2" fill="#d4d4d4"/><rect x="1184.48" y="311.6" width="3.64" height="1.2" fill="#ce9178"/><rect x="1189.03" y="311.6" width="1.82" height="1.2" fill="#9cdcfe"/><rect x="1190.85" y="311.6" width="0.91" height="1.2" fill="#d4d4d4"/><rect x="1191.76" y="311.6" width="3.64" height="1.2" fill="#ce9178"/><rect x="1195.40" y="311.6" width="0.91" height="1.2" fill="#808080"/><rect x="1171.74" y="313.4" width="0.91" height="1.2" fill="#808080"/><rect x="1172.65" y="313.4" width="2.73" height="1.2" fill="#569cd6"/><rect x="1176.29" y="313.4" width="2.73" height="1.2" fill="#9cdcfe"/><rect x="1179.02" y="313.4" width="0.91" height="1.2" fill="#d4d4d4"/><rect x="1179.93" y="313.4" width="4.55" height="1.2" fill="#ce9178"/><rect x="1184.48" y="313.4" width="0.91" height="1.2" fill="#808080"/><rect x="1166.28" y="315.3" width="0.91" height="1.2" fill="#808080"/><rect x="1167.19" y="315.3" width="5.46" height="1.2" fill="#569cd6"/><rect x="1172.65" y="315.3" width="0.91" height="1.2" fill="#808080"/><rect x="1169.92" y="317.2" width="0.91" height="1.2" fill="#808080"/><rect x="1170.83" y="317.2" width="5.46" height="1.2" fill="#569cd6"/><rect x="1177.20" y="317.2" width="4.55" height="1.2" fill="#9cdcfe"/><rect x="1181.75" y="317.2" width="0.91" height="1.2" fill="#d4d4d4"/><rect x="1182.66" y="317.2" width="5.46" height="1.2" fill="#ce9178"/><rect x="1188.12" y="317.2" width="0.91" height="1.2" fill="#808080"/><rect x="1171.74" y="319.0" width="0.91" height="1.2" fill="#808080"/><rect x="1172.65" y="319.0" width="6.37" height="1.2" fill="#569cd6"/><rect x="1179.93" y="319.0" width="4.55" height="1.2" fill="#9cdcfe"/><rect x="1184.48" y="319.0" width="0.91" height="1.2" fill="#d4d4d4"/><rect x="1185.39" y="319.0" width="4.55" height="1.2" fill="#ce9178"/><rect x="1190.85" y="319.0" width="3.64" height="1.2" fill="#9cdcfe"/><rect x="1194.49" y="319.0" width="0.91" height="1.2" fill="#d4d4d4"/><rect x="1195.40" y="319.0" width="4.55" height="1.2" fill="#ce9178"/><rect x="1199.95" y="319.0" width="0.91" height="1.2" fill="#808080"/><rect x="1171.74" y="320.9" width="0.91" height="1.2" fill="#808080"/><rect x="1172.65" y="320.9" width="3.64" height="1.2" fill="#569cd6"/><rect x="1177.20" y="320.9" width="3.64" height="1.2" fill="#9cdcfe"/><rect x="1180.84" y="320.9" width="0.91" height="1.2" fill="#d4d4d4"/><rect x="1181.75" y="320.9" width="2.73" height="1.2" fill="#ce9178"/><rect x="1185.39" y="320.9" width="2.73" height="1.2" fill="#9cdcfe"/><rect x="1188.12" y="320.9" width="0.91" height="1.2" fill="#d4d4d4"/><rect x="1189.03" y="320.9" width="3.64" height="1.2" fill="#ce9178"/><rect x="1192.67" y="320.9" width="0.91" height="1.2" fill="#808080"/><rect x="1166.28" y="322.8" width="0.91" height="1.2" fill="#808080"/><rect x="1167.19" y="322.8" width="4.55" height="1.2" fill="#569cd6"/><rect x="1171.74" y="322.8" width="0.91" height="1.2" fill="#808080"/><rect x="1168.10" y="324.6" width="0.91" height="1.2" fill="#808080"/><rect x="1169.01" y="324.6" width="3.64" height="1.2" fill="#569cd6"/><rect x="1173.56" y="324.6" width="3.64" height="1.2" fill="#9cdcfe"/><rect x="1177.20" y="324.6" width="0.91" height="1.2" fill="#d4d4d4"/><rect x="1178.11" y="324.6" width="5.46" height="1.2" fill="#ce9178"/><rect x="1183.57" y="324.6" width="0.91" height="1.2" fill="#808080"/><rect x="1169.92" y="326.5" width="0.91" height="1.2" fill="#808080"/><rect x="1170.83" y="326.5" width="3.64" height="1.2" fill="#569cd6"/><rect x="1175.38" y="326.5" width="4.55" height="1.2" fill="#9cdcfe"/><rect x="1179.93" y="326.5" width="0.91" height="1.2" fill="#d4d4d4"/><rect x="1180.84" y="326.5" width="6.37" height="1.2" fill="#ce9178"/><rect x="1187.21" y="326.5" width="0.91" height="1.2" fill="#808080"/><rect x="1173.56" y="328.4" width="0.91" height="1.2" fill="#808080"/><rect x="1174.47" y="328.4" width="4.55" height="1.2" fill="#569cd6"/><rect x="1179.93" y="328.4" width="3.64" height="1.2" fill="#9cdcfe"/><rect x="1183.57" y="328.4" width="0.91" height="1.2" fill="#d4d4d4"/><rect x="1184.48" y="328.4" width="2.73" height="1.2" fill="#ce9178"/><rect x="1187.21" y="328.4" width="0.91" height="1.2" fill="#808080"/><rect x="1173.56" y="330.2" width="0.91" height="1.2" fill="#808080"/><rect x="1174.47" y="330.2" width="5.46" height="1.2" fill="#569cd6"/><rect x="1179.93" y="330.2" width="0.91" height="1.2" fill="#808080"/><rect x="1173.56" y="332.1" width="0.91" height="1.2" fill="#808080"/><rect x="1174.47" y="332.1" width="4.55" height="1.2" fill="#569cd6"/><rect x="1179.02" y="332.1" width="0.91" height="1.2" fill="#808080"/><rect x="1173.56" y="334.0" width="0.91" height="1.2" fill="#808080"/><rect x="1174.47" y="334.0" width="4.55" height="1.2" fill="#569cd6"/><rect x="1179.02" y="334.0" width="0.91" height="1.2" fill="#808080"/><rect x="1169.92" y="335.9" width="0.91" height="1.2" fill="#808080"/><rect x="1170.83" y="335.9" width="4.55" height="1.2" fill="#569cd6"/><rect x="1175.38" y="335.9" width="0.91" height="1.2" fill="#808080"/><rect x="1166.28" y="337.7" width="0.91" height="1.2" fill="#808080"/><rect x="1167.19" y="337.7" width="6.37" height="1.2" fill="#569cd6"/><rect x="1174.47" y="337.7" width="1.82" height="1.2" fill="#9cdcfe"/><rect x="1176.29" y="337.7" width="0.91" height="1.2" fill="#d4d4d4"/><rect x="1177.20" y="337.7" width="6.37" height="1.2" fill="#ce9178"/><rect x="1183.57" y="337.7" width="0.91" height="1.2" fill="#808080"/><rect x="1166.28" y="341.5" width="0.91" height="1.2" fill="#808080"/><rect x="1167.19" y="341.5" width="3.64" height="1.2" fill="#569cd6"/><rect x="1171.74" y="341.5" width="1.82" height="1.2" fill="#9cdcfe"/><rect x="1173.56" y="341.5" width="0.91" height="1.2" fill="#d4d4d4"/><rect x="1174.47" y="341.5" width="4.55" height="1.2" fill="#ce9178"/><rect x="1179.02" y="341.5" width="0.91" height="1.2" fill="#808080"/><rect x="1166.28" y="343.3" width="0.91" height="1.2" fill="#808080"/><rect x="1167.19" y="343.3" width="5.46" height="1.2" fill="#569cd6"/><rect x="1173.56" y="343.3" width="3.64" height="1.2" fill="#9cdcfe"/><rect x="1177.20" y="343.3" width="0.91" height="1.2" fill="#d4d4d4"/><rect x="1178.11" y="343.3" width="6.37" height="1.2" fill="#ce9178"/><rect x="1185.39" y="343.3" width="2.73" height="1.2" fill="#9cdcfe"/><rect x="1188.12" y="343.3" width="0.91" height="1.2" fill="#d4d4d4"/><rect x="1189.03" y="343.3" width="3.64" height="1.2" fill="#ce9178"/><rect x="1192.67" y="343.3" width="0.91" height="1.2" fill="#808080"/><rect x="1166.28" y="345.2" width="0.91" height="1.2" fill="#808080"/><rect x="1167.19" y="345.2" width="6.37" height="1.2" fill="#569cd6"/><rect x="1174.47" y="345.2" width="1.82" height="1.2" fill="#9cdcfe"/><rect x="1176.29" y="345.2" width="0.91" height="1.2" fill="#d4d4d4"/><rect x="1177.20" y="345.2" width="4.55" height="1.2" fill="#ce9178"/><rect x="1182.66" y="345.2" width="1.82" height="1.2" fill="#9cdcfe"/><rect x="1184.48" y="345.2" width="0.91" height="1.2" fill="#d4d4d4"/><rect x="1185.39" y="345.2" width="3.64" height="1.2" fill="#ce9178"/><rect x="1189.03" y="345.2" width="0.91" height="1.2" fill="#808080"/><rect x="1166.28" y="347.1" width="0.91" height="1.2" fill="#808080"/><rect x="1167.19" y="347.1" width="5.46" height="1.2" fill="#569cd6"/><rect x="1173.56" y="347.1" width="4.55" height="1.2" fill="#9cdcfe"/><rect x="1178.11" y="347.1" width="0.91" height="1.2" fill="#d4d4d4"/><rect x="1179.02" y="347.1" width="2.73" height="1.2" fill="#ce9178"/><rect x="1182.66" y="347.1" width="3.64" height="1.2" fill="#9cdcfe"/><rect x="1186.30" y="347.1" width="0.91" height="1.2" fill="#d4d4d4"/><rect x="1187.21" y="347.1" width="6.37" height="1.2" fill="#ce9178"/><rect x="1194.49" y="347.1" width="2.73" height="1.2" fill="#9cdcfe"/><rect x="1197.22" y="347.1" width="0.91" height="1.2" fill="#d4d4d4"/><rect x="1198.13" y="347.1" width="3.64" height="1.2" fill="#ce9178"/><rect x="1201.77" y="347.1" width="0.91" height="1.2" fill="#808080"/><rect x="1162.64" y="349.0" width="0.91" height="1.2" fill="#808080"/><rect x="1163.55" y="349.0" width="6.37" height="1.2" fill="#569cd6"/><rect x="1169.92" y="349.0" width="0.91" height="1.2" fill="#808080"/><rect x="1160.82" y="354.6" width="0.91" height="1.2" fill="#808080"/><rect x="1161.73" y="354.6" width="3.64" height="1.2" fill="#569cd6"/><rect x="1165.37" y="354.6" width="0.91" height="1.2" fill="#808080"/><rect x="1159.00" y="360.2" width="0.91" height="1.2" fill="#808080"/><rect x="1159.91" y="360.2" width="6.37" height="1.2" fill="#569cd6"/><rect x="1166.28" y="360.2" width="0.91" height="1.2" fill="#808080"/><rect x="1159.00" y="363.9" width="0.91" height="1.2" fill="#808080"/><rect x="1159.91" y="363.9" width="4.55" height="1.2" fill="#569cd6"/><rect x="1164.46" y="363.9" width="0.91" height="1.2" fill="#808080"/><rect x="1160.82" y="365.8" width="0.91" height="1.2" fill="#808080"/><rect x="1161.73" y="365.8" width="5.46" height="1.2" fill="#569cd6"/><rect x="1167.19" y="365.8" width="0.91" height="1.2" fill="#808080"/><rect x="1169.92" y="367.7" width="0.91" height="1.2" fill="#808080"/><rect x="1170.83" y="367.7" width="6.37" height="1.2" fill="#569cd6"/><rect x="1178.11" y="367.7" width="1.82" height="1.2" fill="#9cdcfe"/><rect x="1179.93" y="367.7" width="0.91" height="1.2" fill="#d4d4d4"/><rect x="1180.84" y="367.7" width="3.64" height="1.2" fill="#ce9178"/><rect x="1184.48" y="367.7" width="0.91" height="1.2" fill="#808080"/><rect x="1169.92" y="369.5" width="0.91" height="1.2" fill="#808080"/><rect x="1170.83" y="369.5" width="6.37" height="1.2" fill="#569cd6"/><rect x="1178.11" y="369.5" width="1.82" height="1.2" fill="#9cdcfe"/><rect x="1179.93" y="369.5" width="0.91" height="1.2" fill="#d4d4d4"/><rect x="1180.84" y="369.5" width="3.64" height="1.2" fill="#ce9178"/><rect x="1184.48" y="369.5" width="0.91" height="1.2" fill="#808080"/><rect x="1160.82" y="377.0" width="0.91" height="1.2" fill="#808080"/><rect x="1161.73" y="377.0" width="2.73" height="1.2" fill="#569cd6"/><rect x="1164.46" y="377.0" width="0.91" height="1.2" fill="#808080"/><rect x="1169.92" y="378.9" width="0.91" height="1.2" fill="#808080"/><rect x="1170.83" y="378.9" width="3.64" height="1.2" fill="#569cd6"/><rect x="1175.38" y="378.9" width="1.82" height="1.2" fill="#9cdcfe"/><rect x="1177.20" y="378.9" width="0.91" height="1.2" fill="#d4d4d4"/><rect x="1178.11" y="378.9" width="3.64" height="1.2" fill="#ce9178"/><rect x="1181.75" y="378.9" width="0.91" height="1.2" fill="#808080"/><rect x="1169.92" y="380.7" width="0.91" height="1.2" fill="#808080"/><rect x="1170.83" y="380.7" width="5.46" height="1.2" fill="#569cd6"/><rect x="1177.20" y="380.7" width="1.82" height="1.2" fill="#9cdcfe"/><rect x="1179.02" y="380.7" width="0.91" height="1.2" fill="#d4d4d4"/><rect x="1179.93" y="380.7" width="4.55" height="1.2" fill="#ce9178"/><rect x="1184.48" y="380.7" width="0.91" height="1.2" fill="#808080"/><rect x="1159.00" y="384.5" width="0.91" height="1.2" fill="#808080"/><rect x="1159.91" y="384.5" width="6.37" height="1.2" fill="#569cd6"/><rect x="1166.28" y="384.5" width="0.91" height="1.2" fill="#808080"/><rect x="1159.00" y="386.4" width="0.91" height="1.2" fill="#808080"/><rect x="1159.91" y="386.4" width="5.46" height="1.2" fill="#569cd6"/><rect x="1165.37" y="386.4" width="0.91" height="1.2" fill="#808080"/></g></svg>
<div style="position:absolute;left:1251px;top:96.3px;width:15px;height:79px;background:#4a4a4a"></div>
<svg style="position:absolute;left:0;top:0" width="1266" height="711" viewBox="0 0 1266 711"><path d="M22 53 L16 53 Q15 53 15 54 L15 70.5 Q15 71.5 16 71.5 L30 71.5 Q31 71.5 31 70.5 L31 65.5" stroke="#ffffff" stroke-width="2" fill="none"/><path d="M22.2 46.3 L32.5 46.3 L38 51.8 L38 64.3 L22.2 64.3 Z" stroke="#ffffff" stroke-width="2" fill="none" stroke-linejoin="round"/><path d="M32.5 46.3 L32.5 51.8 L38 51.8" stroke="#ffffff" stroke-width="1.5" fill="none"/><circle cx="30.3" cy="108.3" r="8.3" stroke="#858585" stroke-width="1.9" fill="none"/><path d="M24.5 114.5 L15.5 123.8" stroke="#858585" stroke-width="2" fill="none" stroke-linecap="round"/><circle cx="20.7" cy="157" r="3.3" stroke="#858585" stroke-width="1.7" fill="none"/><circle cx="20.7" cy="175.3" r="3.3" stroke="#858585" stroke-width="1.7" fill="none"/><circle cx="32.9" cy="161.8" r="3.3" stroke="#858585" stroke-width="1.7" fill="none"/><path d="M20.7 160.3 L20.7 172 M32.9 165.1 Q32.9 168.5 27 168.5 L22 168.5 Q20.7 168.5 20.7 170" stroke="#858585" stroke-width="1.7" fill="none"/><path d="M22 206.5 L22 212 M22 206.5 L39.5 216.3 L28 222.8" stroke="#858585" stroke-width="1.8" fill="none" stroke-linejoin="miter"/><ellipse cx="19.8" cy="226.5" rx="4.2" ry="5" stroke="#858585" stroke-width="1.7" fill="none"/><path d="M13.5 223 L16 224 M13.5 227 L15.6 227 M13.8 231 L16.2 229.5 M26 223 L23.6 224 M26 227 L24 227 M25.8 231 L23.4 229.5 M19.8 221.5 L19.8 231.5" stroke="#858585" stroke-width="1.5" fill="none"/><path d="M14.5 264.5 L23.5 264.5 L23.5 274.5 L33.5 274.5 L33.5 284.3 L14.5 284.3 Z M14.5 274.5 L23.5 274.5 L23.5 284.3" stroke="#858585" stroke-width="1.8" fill="none"/><rect x="29.5" y="260.3" width="9.6" height="9.6" stroke="#858585" stroke-width="1.8" fill="none"/><circle cx="27" cy="578.4" r="12.6" stroke="#858585" stroke-width="1.8" fill="none"/><circle cx="26.9" cy="575" r="5.2" stroke="#858585" stroke-width="1.8" fill="none"/><path d="M19.5 588.8 Q21 581.8 26.9 581.8 Q32.8 581.8 34.4 588.8" stroke="#858585" stroke-width="1.8" fill="none"/><path d="M35.19 627.68 L38.94 627.86 L38.94 632.94 L35.19 633.12 L34.54 634.69 L37.07 637.47 L33.47 641.07 L30.69 638.54 L29.12 639.19 L28.94 642.94 L23.86 642.94 L23.68 639.19 L22.11 638.54 L19.33 641.07 L15.73 637.47 L18.26 634.69 L17.61 633.12 L13.86 632.94 L13.86 627.86 L17.61 627.68 L18.26 626.11 L15.73 623.33 L19.33 619.73 L22.11 622.26 L23.68 621.61 L23.86 617.86 L28.94 617.86 L29.12 621.61 L30.69 622.26 L33.47 619.73 L37.07 623.33 L34.54 626.11 Z" stroke="#858585" stroke-width="1.8" fill="none" stroke-linejoin="round"/><circle cx="26.4" cy="630.4" r="3" stroke="#858585" stroke-width="1.8" fill="none"/><path d="M58.80 82.90 L64.00 88.10 L69.20 82.90" stroke="#c5c5c5" stroke-width="1.4" fill="none"/><path d="M77.60 104.00 L82.40 108.80 L77.60 113.60" stroke="#c5c5c5" stroke-width="1.3" fill="none"/><path d="M75.20 130.80 L80.00 135.60 L84.80 130.80" stroke="#c5c5c5" stroke-width="1.3" fill="none"/><path d="M86.60 152.80 L91.40 157.60 L86.60 162.40" stroke="#c5c5c5" stroke-width="1.3" fill="none"/><path d="M86.60 177.20 L91.40 182.00 L86.60 186.80" stroke="#c5c5c5" stroke-width="1.3" fill="none"/><path d="M86.60 201.60 L91.40 206.40 L86.60 211.20" stroke="#c5c5c5" stroke-width="1.3" fill="none"/><path d="M77.60 226.00 L82.40 230.80 L77.60 235.60" stroke="#c5c5c5" stroke-width="1.3" fill="none"/><path d="M76.56 250.16 L72.80 255.20 L76.56 260.24 M79.44 250.16 L83.20 255.20 L79.44 260.24" stroke="#e4703a" stroke-width="1.8" fill="none"/><path d="M71.5 286.6 V275.3 H81" stroke="#8d72d6" stroke-width="1.6" fill="none"/><rect x="74.2" y="277.6" width="9.8" height="8.6" fill="#1e1320" stroke="#a874d0" stroke-width="1.3"/><path d="M74.8 285.7 L78 280.7 L80.2 283.1 L81.5 281.9 L83.5 285.7 Z" fill="#b27fd8"/><circle cx="81.3" cy="279.9" r="1" fill="#9b8ee8"/><path d="M76.56 298.96 L72.80 304.00 L76.56 309.04 M79.44 298.96 L83.20 304.00 L79.44 309.04" stroke="#e4703a" stroke-width="1.8" fill="none"/><path d="M76.56 323.36 L72.80 328.40 L76.56 333.44 M79.44 323.36 L83.20 328.40 L79.44 333.44" stroke="#e4703a" stroke-width="1.8" fill="none"/><path d="M76.56 347.76 L72.80 352.80 L76.56 357.84 M79.44 347.76 L83.20 352.80 L79.44 357.84" stroke="#e4703a" stroke-width="1.8" fill="none"/><path d="M76.56 372.16 L72.80 377.20 L76.56 382.24 M79.44 372.16 L83.20 377.20 L79.44 382.24" stroke="#e4703a" stroke-width="1.8" fill="none"/><path d="M70.8 396.4 L79.3 394.8 L79.3 408.4 L70.8 406.8 Z" fill="#4a9bd1"/><path d="M79.3 397.1 h5.6 M79.3 400.1 h5.6 M79.3 403.1 h5.6 M79.3 406.1 h5.6" stroke="#3f86b8" stroke-width="1.5"/><path d="M72 399.1 L73.3 404.1 L74.8 400.6 L76.3 404.1 L77.6 399.1" stroke="#12283a" stroke-width="1" fill="none"/><path d="M70.8 420.8 L79.3 419.2 L79.3 432.8 L70.8 431.2 Z" fill="#4a9bd1"/><path d="M79.3 421.5 h5.6 M79.3 424.5 h5.6 M79.3 427.5 h5.6 M79.3 430.5 h5.6" stroke="#3f86b8" stroke-width="1.5"/><path d="M72 423.5 L73.3 428.5 L74.8 425.0 L76.3 428.5 L77.6 423.5" stroke="#12283a" stroke-width="1" fill="none"/><path d="M70.8 445.2 L79.3 443.6 L79.3 457.2 L70.8 455.6 Z" fill="#4a9bd1"/><path d="M79.3 445.9 h5.6 M79.3 448.9 h5.6 M79.3 451.9 h5.6 M79.3 454.9 h5.6" stroke="#3f86b8" stroke-width="1.5"/><path d="M72 447.9 L73.3 452.9 L74.8 449.4 L76.3 452.9 L77.6 447.9" stroke="#12283a" stroke-width="1" fill="none"/><path d="M63.60 617.00 L68.40 621.80 L63.60 626.60" stroke="#c5c5c5" stroke-width="1.3" fill="none"/><path d="M63.60 641.70 L68.40 646.50 L63.60 651.30" stroke="#c5c5c5" stroke-width="1.3" fill="none"/><circle cx="210.5" cy="52.7" r="1.3" fill="#c5c5c5"/><circle cx="217" cy="52.7" r="1.3" fill="#c5c5c5"/><circle cx="223.5" cy="52.7" r="1.3" fill="#c5c5c5"/><path d="M147 77.8 L141 77.8 L141 91 L146.5 91 M147 77.8 L149 77.8 L153 81.8 L153 84.5 M149 77.8 L149 81.8 L153 81.8 M152 86 L152 93.5 M148 89.8 L156 89.8" stroke="#c5c5c5" stroke-width="1.3" fill="none"/><path d="M172 90 L166.6 90 L166.6 78 L171.5 78 L173 79.8 L181.2 79.8 L181.2 85 M178.5 86 L178.5 93.5 M174.5 89.8 L182.5 89.8" stroke="#c5c5c5" stroke-width="1.3" fill="none"/><path d="M196.5 79.6 A6.3 6.3 0 1 0 200.3 78.5" stroke="#c5c5c5" stroke-width="1.4" fill="none"/><path d="M194.8 77.3 L197.2 80.6 L193.8 81.8" stroke="#c5c5c5" stroke-width="1.3" fill="none"/><rect x="220.5" y="82.5" width="10" height="8.8" rx="1.3" stroke="#c5c5c5" stroke-width="1.3" fill="none"/><path d="M223.8 82.5 L223.8 79.8 Q223.8 78.6 225 78.6 L232.6 78.6 Q233.8 78.6 233.8 79.8 L233.8 86.3 Q233.8 87.5 232.6 87.5 L230.5 87.5 M222.8 87 L228.3 87" stroke="#c5c5c5" stroke-width="1.3" fill="none"/><path d="M262.56 47.96 L258.80 53.00 L262.56 58.04 M265.44 47.96 L269.20 53.00 L265.44 58.04" stroke="#e4703a" stroke-width="1.8" fill="none"/><path d="M448.56 47.96 L444.80 53.00 L448.56 58.04 M451.44 47.96 L455.20 53.00 L451.44 58.04" stroke="#e4703a" stroke-width="1.8" fill="none"/><path d="M619.56 47.96 L615.80 53.00 L619.56 58.04 M622.44 47.96 L626.20 53.00 L622.44 58.04" stroke="#e4703a" stroke-width="1.8" fill="none"/><path d="M828.36 47.96 L824.60 53.00 L828.36 58.04 M831.24 47.96 L835.00 53.00 L831.24 58.04" stroke="#e4703a" stroke-width="1.8" fill="none"/><path d="M786.5 48 L796 57.5 M796 48 L786.5 57.5" stroke="#ffffff" stroke-width="1.5"/><rect x="1204.5" y="46" width="13" height="13" rx="1.5" stroke="#c5c5c5" stroke-width="1.5" fill="none"/><path d="M1211 46 L1211 59" stroke="#c5c5c5" stroke-width="1.5"/><circle cx="1234" cy="52.3" r="1.3" fill="#c5c5c5"/><circle cx="1240.5" cy="52.3" r="1.3" fill="#c5c5c5"/><circle cx="1247" cy="52.3" r="1.3" fill="#c5c5c5"/><path d="M269.56 79.46 L265.80 84.50 L269.56 89.54 M272.44 79.46 L276.20 84.50 L272.44 89.54" stroke="#e4703a" stroke-width="1.8" fill="none"/><path d="M434 79.5 L439 84.5 L434 89.5" stroke="#a0a0a0" stroke-width="1.2" fill="none"/><circle cx="447.5" cy="88.6" r="0.9" fill="#a0a0a0"/><circle cx="451.2" cy="88.6" r="0.9" fill="#a0a0a0"/><circle cx="454.8" cy="88.6" r="0.9" fill="#a0a0a0"/><path d="M300.50 126.64 L306.00 132.14 L311.50 126.64" stroke="#7a7a7a" stroke-width="1.2" fill="none"/><path d="M300.50 147.73 L306.00 153.23 L311.50 147.73" stroke="#7a7a7a" stroke-width="1.2" fill="none"/><path d="M300.50 421.90 L306.00 427.40 L311.50 421.90" stroke="#7a7a7a" stroke-width="1.2" fill="none"/><path d="M300.50 442.99 L306.00 448.49 L311.50 442.99" stroke="#7a7a7a" stroke-width="1.2" fill="none"/><path d="M300.50 632.80 L306.00 638.30 L311.50 632.80" stroke="#7a7a7a" stroke-width="1.2" fill="none"/><path d="M300.50 653.89 L306.00 659.39 L311.50 653.89" stroke="#7a7a7a" stroke-width="1.2" fill="none"/><path d="M11 12.9 L23.3 23.6" stroke="#2b98e2" stroke-width="2.9" stroke-linecap="round"/><path d="M10.8 19.1 L23.2 8.4" stroke="#2f9fe8" stroke-width="2.9" stroke-linecap="round"/><path d="M22.4 7.2 L27.9 9.7 L27.9 22.3 L22.6 25 Z" fill="#3aa8f0"/><path d="M22.4 7.2 L24.2 8.1 L24.2 24.2 L22.6 25 Z" fill="#1f8ad6"/><rect x="1042.5" y="9" width="15" height="14.5" rx="1.5" stroke="#c5c5c5" stroke-width="1.5" fill="none"/><rect x="1043" y="9.5" width="6.5" height="13.5" fill="#c5c5c5"/><rect x="1066.8" y="9" width="15" height="14.5" rx="1.5" stroke="#c5c5c5" stroke-width="1.5" fill="none"/><path d="M1067 18.5 H1081.5" stroke="#c5c5c5" stroke-width="1.5"/><rect x="1091" y="9" width="15" height="14.5" rx="1.5" stroke="#c5c5c5" stroke-width="1.5" fill="none"/><path d="M1098.5 9 V23.5" stroke="#c5c5c5" stroke-width="1.5"/><rect x="1116.5" y="9.2" width="4.8" height="13.8" rx="1.2" stroke="#c5c5c5" stroke-width="1.4" fill="none"/><rect x="1125" y="9.2" width="5.5" height="5.2" rx="1.6" stroke="#c5c5c5" stroke-width="1.4" fill="none"/><rect x="1125" y="17.5" width="5.5" height="5.2" rx="1.6" stroke="#c5c5c5" stroke-width="1.4" fill="none"/><path d="M1154 17.2 H1164.5" stroke="#cccccc" stroke-width="1.2"/><rect x="1197" y="14" width="8" height="8" stroke="#cccccc" stroke-width="1.2" fill="none"/><path d="M1199 14 V12.3 H1207 V20 H1205" stroke="#cccccc" stroke-width="1.2" fill="none"/><path d="M1239 11.8 L1250 22.5 M1250 11.8 L1239 22.5" stroke="#cccccc" stroke-width="1.3"/></svg>
<svg style="position:absolute;left:0;top:0" width="1266" height="711" viewBox="0 0 1266 711"><circle cx="24.6" cy="670.3" r="6.2" stroke="#fff" stroke-width="1.3" fill="none"/><path d="M22 667.7 L27.2 672.9 M27.2 667.7 L22 672.9" stroke="#fff" stroke-width="1.3"/><path d="M55 664.2 L61.8 676.2 L48.2 676.2 Z" stroke="#fff" stroke-width="1.3" fill="none" stroke-linejoin="round"/><path d="M55 668 V672.3 M55 673.8 V675" stroke="#fff" stroke-width="1.3"/></svg>
<div class="t" style="left:36.50px;top:667.00px;font-size:12.50px;color:#ffffff;font-weight:normal;font-style:normal;transform:scaleX(0.9369);">0</div>
<div class="t" style="left:66.00px;top:667.00px;font-size:12.50px;color:#ffffff;font-weight:normal;font-style:normal;transform:scaleX(1.0090);">0</div>
<div class="t" style="left:715.00px;top:666.00px;font-size:13.81px;color:#ffffff;font-weight:normal;font-style:normal;transform:scaleX(0.9282);">Ln 1, Col 1</div>
<div class="t" style="left:796.00px;top:666.00px;font-size:13.81px;color:#ffffff;font-weight:normal;font-style:normal;transform:scaleX(0.8598);">Spaces: 4</div>
<div class="t" style="left:867.00px;top:666.00px;font-size:13.81px;color:#ffffff;font-weight:normal;font-style:normal;transform:scaleX(0.8949);">UTF-8</div>
<div class="t" style="left:920.00px;top:666.00px;font-size:13.81px;color:#ffffff;font-weight:normal;font-style:normal;transform:scaleX(0.7984);">CRLF</div>
<div class="t" style="left:987.00px;top:666.00px;font-size:13.81px;color:#ffffff;font-weight:normal;font-style:normal;transform:scaleX(0.9204);">HTML</div>
<div class="t" style="left:1058.60px;top:666.00px;font-size:13.81px;color:#ffffff;font-weight:normal;font-style:normal;transform:scaleX(0.9117);">Go Live</div>
<div class="t" style="left:1139.40px;top:666.00px;font-size:13.81px;color:#ffffff;font-weight:normal;font-style:normal;transform:scaleX(0.9574);">Prettier</div>
<svg style="position:absolute;left:0;top:0" width="1266" height="711" viewBox="0 0 1266 711"><path d="M970.6 663.8 Q967.9 663.8 967.9 666.3 L967.9 668.3 Q967.9 669.8 966.3 669.8 Q967.9 669.8 967.9 671.3 L967.9 673.6 Q967.9 676 970.6 676" stroke="#fff" stroke-width="1.3" fill="none"/><path d="M974.5 663.8 Q977.2 663.8 977.2 666.3 L977.2 668.3 Q977.2 669.6 978.8 669.8" stroke="#fff" stroke-width="1.3" fill="none"/><circle cx="976.6" cy="673.9" r="3.5" fill="#007acc" stroke="#fff" stroke-width="1.3"/><path d="M975.3 672.6 L977.9 675.2 M977.9 672.6 L975.3 675.2" stroke="#fff" stroke-width="0.9"/><circle cx="1047" cy="668.5" r="5.8" stroke="#fff" stroke-width="1.3" fill="none"/><circle cx="1047" cy="668.5" r="3.2" stroke="#fff" stroke-width="1.2" fill="none"/><circle cx="1047" cy="668.5" r="1.2" fill="#fff"/><path d="M1047 670 V678" stroke="#fff" stroke-width="1.8"/><path d="M1120 670.5 L1123.5 675 L1130.5 664.5 M1124.5 670.5 L1126.5 675 L1134.5 664.5" stroke="#fff" stroke-width="1.5" fill="none"/><circle cx="1205" cy="669" r="3" stroke="#fff" stroke-width="1.3" fill="none"/><path d="M1200.5 678 Q1201 672.5 1205 672.5 Q1209 672.5 1209.5 678" stroke="#fff" stroke-width="1.3" fill="none"/><path d="M1207 663.5 H1215 V670 H1211 L1209.5 671.5" stroke="#fff" stroke-width="1.2" fill="none"/><path d="M1236 674.5 Q1236.5 673 1236.5 670 Q1236.5 664.5 1241 664.5 Q1245.5 664.5 1245.5 670 Q1245.5 673 1246.8 674.5 Z M1239.2 676.5 Q1241 678.3 1242.8 676.5" stroke="#fff" stroke-width="1.3" fill="none" stroke-linejoin="round"/></svg>
<svg style="position:absolute;left:0;top:0" width="1266" height="711" viewBox="0 0 1266 711"><path d="M9.5 690 L16 689 V696 H9.5 Z M17.2 688.8 L24.5 687.8 V696 H17.2 Z M9.5 697.2 H16 V704.2 L9.5 703.3 Z M17.2 697.2 H24.5 V705.3 L17.2 704.4 Z" fill="#ffffff"/><circle cx="53" cy="694" r="4.6" stroke="#222" stroke-width="1.4" fill="none"/><path d="M49.6 697.6 L44.5 703" stroke="#222" stroke-width="1.6"/><path d="M219.5 695.5 L238 692.5 M219 699 L238 693.5 M220 702 L238.5 694.5 M222.5 704.5 L239 695.5 M225 707 L239.5 696.5" stroke="#8f86c9" stroke-width="1.1" fill="none"/><path d="M236 691.5 L251.5 685.8 L252.5 688.6 L238.5 696 Z" fill="#e4e0ee"/><path d="M236 691.5 L240 690 L241.5 694.5 L238.5 696 Z" fill="#6c64a8"/><g transform="rotate(22 256 700.5)"><rect x="246.5" y="696.5" width="19" height="8.5" rx="2" fill="#d8a93a"/><rect x="243" y="697.5" width="4" height="6.5" fill="#c99524"/><rect x="265" y="697.5" width="4" height="6.5" fill="#c99524"/><circle cx="256" cy="700.7" r="2.3" fill="#f5ead0"/></g><circle cx="221" cy="689.8" r="1.3" fill="#d6b04a"/><circle cx="228.5" cy="687.3" r="1.2" fill="#b9b4dc"/><circle cx="229" cy="708" r="1.3" fill="#d6b04a"/><circle cx="238.3" cy="702" r="1.2" fill="#d6b04a"/><circle cx="241.5" cy="705" r="1.3" fill="#c4bfe4"/><circle cx="267.5" cy="687.5" r="1.4" fill="#d6b04a"/><circle cx="264.7" cy="695" r="1.3" fill="#d6b04a"/><circle cx="258.5" cy="694" r="1.1" fill="#c4bfe4"/><rect x="284" y="689" width="16" height="16" rx="5" fill="#4a8cff"/><rect x="287" y="694" width="7" height="6" rx="1" fill="#fff"/><path d="M294.5 696.5 L298 694.5 V699.5 L294.5 697.5 Z" fill="#fff"/><rect x="318" y="689" width="16" height="16" rx="1.5" fill="#1d6f42"/><rect x="326" y="691" width="8" height="12" fill="#21a366"/><text x="319.5" y="701.5" font-family="Liberation Sans" font-size="10" font-weight="bold" fill="#fff">x</text><rect x="352" y="689" width="16" height="16" rx="2" fill="#3d3d3d"/><path d="M364 691.5 L356 695 L363.5 699 L356 702.5" stroke="#f59e0b" stroke-width="2.2" fill="none"/><rect x="387" y="689.5" width="15" height="15" rx="2.5" fill="#ea7c2c"/><path d="M390.5 693.5 Q392 691.8 393.5 693.5 Q394.5 694.8 395.5 693.5 Q397 691.8 398.5 693.5 Q399.5 695 398 697 Q399.5 699 398.5 700.5 Q397 702.2 395.5 700.5 Q394.5 699.2 393.5 700.5 Q392 702.2 390.5 700.5 Q389.5 699 391 697 Q389.5 695 390.5 693.5 Z" stroke="#fff" stroke-width="1.5" fill="none"/><rect x="421" y="689" width="16" height="16" fill="#1e2a50"/><rect x="421" y="689" width="16" height="7" fill="#dfe6f6"/><text x="422" y="695.5" font-family="Liberation Sans" font-size="6.5" font-weight="bold" fill="#1e2a50">DEV</text><text x="423" y="703" font-family="Liberation Sans" font-size="7" font-weight="bold" fill="#4aa3ff">C++</text><rect x="455" y="689" width="17" height="16" rx="1" fill="#2f6e91"/><path d="M458 702 Q460 693 466 692 Q469 696 470 703" stroke="#9fd3ef" stroke-width="1" fill="none"/><rect x="489" y="689" width="17" height="16" rx="1" fill="#e7312d"/><path d="M493 697 L497.5 692.5 L502 697 L497.5 701.5 Z" fill="#fff"/><path d="M495.5 697 L497.5 695 L499.5 697 L497.5 699 Z" fill="#e7312d"/><circle cx="532" cy="697" r="8" fill="#db4437"/><path d="M532 697 L539 693 A8 8 0 0 1 536 704 Z" fill="#f4b400"/><path d="M532 697 L536 704 A8 8 0 0 1 525 693 Z" fill="#0f9d58"/><circle cx="532" cy="697" r="3.6" fill="#4285f4" stroke="#fff" stroke-width="1.3"/><rect x="549.5" y="683" width="33" height="28" fill="#3b3b3b"/><g transform="translate(556.3 688.6) scale(0.98) translate(-10.8 -7.2)"><path d="M11 12.9 L23.3 23.6" stroke="#2b98e2" stroke-width="2.9" stroke-linecap="round"/><path d="M10.8 19.1 L23.2 8.4" stroke="#2f9fe8" stroke-width="2.9" stroke-linecap="round"/><path d="M22.4 7.2 L27.9 9.7 L27.9 22.3 L22.6 25 Z" fill="#3aa8f0"/><path d="M22.4 7.2 L24.2 8.1 L24.2 24.2 L22.6 25 Z" fill="#1f8ad6"/></g><rect x="592" y="690" width="17" height="14" fill="#f2c14e"/><rect x="592" y="692.5" width="17" height="3" fill="#e0a526"/><rect x="596" y="698" width="9" height="6" fill="#3d8fd6"/><rect x="625" y="690" width="19" height="14" rx="3" fill="#6ea3e6"/><rect x="627.5" y="692.5" width="14" height="9" rx="2" fill="#e8f1fb"/><circle cx="634.5" cy="697" r="3" fill="#2a64b8"/><rect x="661" y="689" width="14" height="16" fill="#e9e9e9"/><path d="M663 694 H672 M663 697 H672 M663 700 H672" stroke="#aaa" stroke-width="0.8"/><path d="M668 699 L676 689" stroke="#7cb342" stroke-width="2.5"/><path d="M661 693 L661 708 L664.5 704.5 L667 710 L669 709 L666.5 703.5 L671.5 703.5 Z" fill="#fff" stroke="#000" stroke-width="0.8"/><rect x="550" y="709" width="33" height="2" fill="#8fc7ec"/><rect x="589" y="709" width="25" height="2" fill="#8fc7ec"/><rect x="623" y="709" width="24" height="2" fill="#8fc7ec"/><rect x="657" y="709" width="24" height="2" fill="#8fc7ec"/><rect x="518" y="709" width="30" height="2" fill="#8fc7ec"/><circle cx="896.3" cy="697.2" r="9.3" fill="#f0a22e"/><circle cx="890.8" cy="692.6" r="8" fill="#1c1c1c"/><g fill="#c4dbf5"><ellipse cx="891.5" cy="692" rx="6.3" ry="2.4"/><circle cx="891.8" cy="689.5" r="3.4"/><circle cx="888.5" cy="691" r="2.4"/></g><g fill="#c4dbf5"><ellipse cx="901" cy="703.3" rx="6" ry="2.4"/><circle cx="901.3" cy="700.8" r="3.2"/><circle cx="898" cy="702.3" r="2.3"/></g><path d="M1021.5 701 L1027 695.5 L1032.5 701" stroke="#fff" stroke-width="1.3" fill="none"/><rect x="1045" y="692" width="8" height="11" rx="2" stroke="#ddd" stroke-width="1.1" fill="none"/><path d="M1044 690 V705 M1054.5 690 V705" stroke="#ddd" stroke-width="0.8"/><path d="M1067 704 Q1067 693 1078 692 M1070 704 Q1070 696 1078 695.5 M1073 704 Q1073 699 1078 699" stroke="#ddd" stroke-width="1.1" fill="none"/><circle cx="1077" cy="703" r="1.3" fill="#ddd"/><path d="M1086.5 695 H1090 L1094 691.5 V703.5 L1090 700 H1086.5 Z" stroke="#ddd" stroke-width="1.1" fill="none"/><path d="M1096.5 694.5 Q1098.5 697.5 1096.5 700.5 M1099 692.5 Q1102 697.5 1099 702.5" stroke="#ddd" stroke-width="1.1" fill="none"/><path d="M1108 693 V698 M1110.5 693 V698 M1107.5 698 H1111 V700 Q1109.3 702 1109.3 704" stroke="#ddd" stroke-width="1.1" fill="none"/><rect x="1112" y="694.5" width="10" height="8" stroke="#ddd" stroke-width="1.1" fill="none"/><rect x="1113.5" y="696" width="5" height="5" fill="#ddd"/><rect x="1122.3" y="697" width="1.3" height="3" fill="#ddd"/><path d="M1227 690 H1243.5 V702 H1238 L1235 705.5 L1232 702 H1227 Z" fill="#fff"/><path d="M1230 693.5 H1240.5 M1230 696.3 H1240.5 M1230 699 H1237" stroke="#1f1f1f" stroke-width="1"/><rect x="1260" y="683" width="1" height="28" fill="#555"/></svg>
<div class="t" style="left:70.60px;top:692.00px;font-size:13.95px;color:#333333;font-weight:normal;font-style:normal;transform:scaleX(0.9141);">Search</div>
<div class="t" style="left:915.60px;top:692.00px;font-size:13.95px;color:#ffffff;font-weight:normal;font-style:normal;transform:scaleX(0.8241);">17°C</div>
<div class="t" style="left:950.80px;top:692.00px;font-size:13.95px;color:#ffffff;font-weight:normal;font-style:normal;transform:scaleX(0.8754);">Partly clo...</div>
<div class="t" style="left:1132.00px;top:692.00px;font-size:13.66px;color:#ffffff;font-weight:normal;font-style:normal;transform:scaleX(0.7091);">ENG</div>
<div class="t" style="left:1167.80px;top:692.00px;font-size:13.66px;color:#ffffff;font-weight:normal;font-style:normal;transform:scaleX(0.7702);">6:47 PM</div>
<div style="position:absolute;left:469px;top:636px;width:328px;height:39px;background:rgba(252,252,252,0.968)"></div>
<div style="position:absolute;left:478.3px;top:650px;width:1.8px;height:10px;background:#c4c6c8"></div><div style="position:absolute;left:482px;top:650px;width:1.8px;height:10px;background:#c4c6c8"></div>
<div class="t" style="left:493.70px;top:649.00px;font-size:12.50px;color:#3c4043;font-weight:normal;font-style:normal;transform:scaleX(0.8565);">srilance.lk is sharing your screen.</div>
<div style="position:absolute;left:662px;top:641px;width:93.5px;height:29px;background:#1a73e8;border-radius:4px"></div>
<div class="t" style="left:676.80px;top:650.00px;font-size:11.92px;color:#ffffff;font-weight:bold;font-style:normal;transform:scaleX(0.8648);">Stop sharing</div>
<div class="t" style="left:765.00px;top:649.00px;font-size:12.50px;color:#7089e0;font-weight:normal;font-style:normal;transform:scaleX(0.8787);">Hide</div>
</body></html>
